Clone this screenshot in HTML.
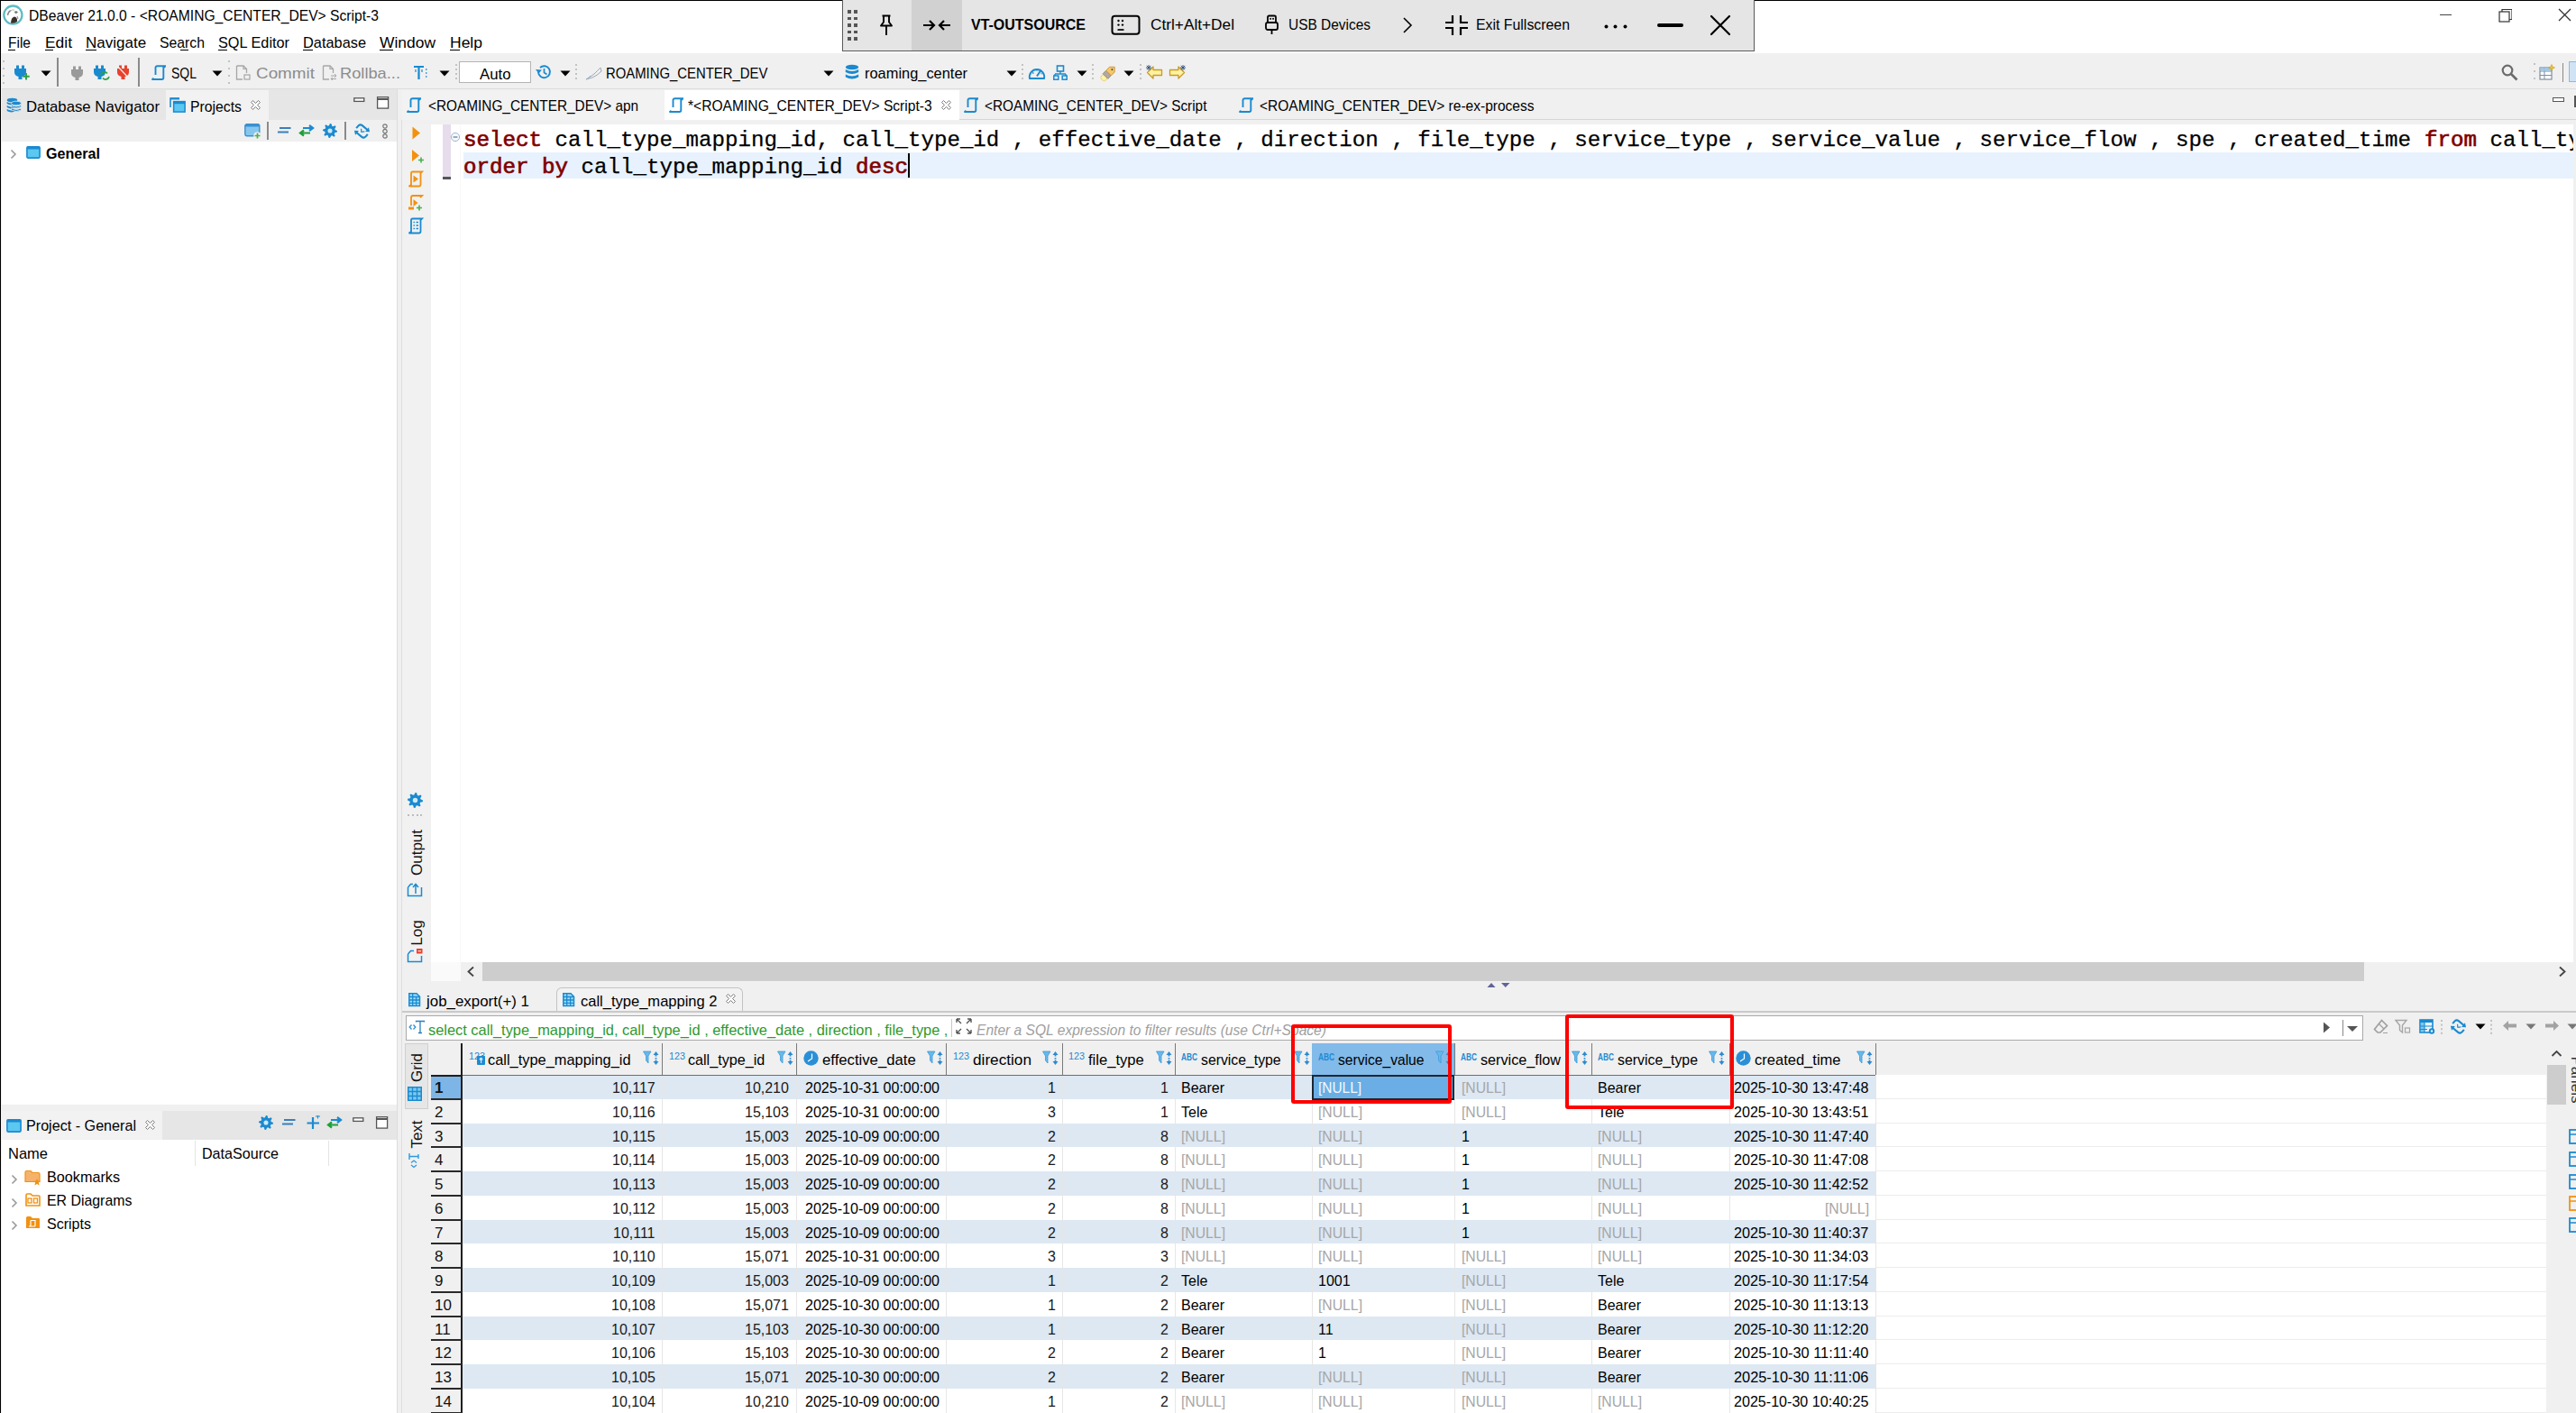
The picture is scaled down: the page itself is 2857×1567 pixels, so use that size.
<!DOCTYPE html><html><head><meta charset="utf-8"><style>
html,body{margin:0;padding:0;width:2857px;height:1567px;overflow:hidden;background:#f0f0f0;}
body>div,body>svg{position:absolute;}
.t{white-space:pre;}
</style></head><body>
<div style="left:0px;top:0px;width:2857px;height:59px;background:#fff;"></div>
<div style="left:0px;top:0px;width:2857px;height:1px;background:#000;"></div>
<div style="left:0px;top:0px;width:1px;height:1567px;background:#000;"></div>
<div class="t" style="left:32.00px;top:8.12px;font-family:'Liberation Sans',sans-serif;font-size:17px;line-height:18.989px;color:#000;transform:scaleX(0.9208);transform-origin:0 0;">DBeaver 21.0.0 - &lt;ROAMING_CENTER_DEV&gt; Script-3</div>
<div class="t" style="left:9.00px;top:38.12px;font-family:'Liberation Sans',sans-serif;font-size:17px;line-height:18.989px;color:#000;transform:scaleX(0.9126);transform-origin:0 0;">File</div>
<div class="t" style="left:50.00px;top:38.12px;font-family:'Liberation Sans',sans-serif;font-size:17px;line-height:18.989px;color:#000;transform:scaleX(1.0241);transform-origin:0 0;">Edit</div>
<div class="t" style="left:95.00px;top:38.12px;font-family:'Liberation Sans',sans-serif;font-size:17px;line-height:18.989px;color:#000;">Navigate</div>
<div class="t" style="left:177.00px;top:38.12px;font-family:'Liberation Sans',sans-serif;font-size:17px;line-height:18.989px;color:#000;transform:scaleX(0.9282);transform-origin:0 0;">Search</div>
<div class="t" style="left:242.00px;top:38.12px;font-family:'Liberation Sans',sans-serif;font-size:17px;line-height:18.989px;color:#000;transform:scaleX(0.9573);transform-origin:0 0;">SQL Editor</div>
<div class="t" style="left:336.00px;top:38.12px;font-family:'Liberation Sans',sans-serif;font-size:17px;line-height:18.989px;color:#000;transform:scaleX(0.9619);transform-origin:0 0;">Database</div>
<div class="t" style="left:421.00px;top:38.12px;font-family:'Liberation Sans',sans-serif;font-size:17px;line-height:18.989px;color:#000;transform:scaleX(1.0254);transform-origin:0 0;">Window</div>
<div class="t" style="left:499.00px;top:38.12px;font-family:'Liberation Sans',sans-serif;font-size:17px;line-height:18.989px;color:#000;transform:scaleX(1.0296);transform-origin:0 0;">Help</div>
<div style="left:2px;top:59px;width:2855px;height:40px;background:#f0f0f0;"></div>
<div style="left:2px;top:98px;width:2855px;height:1px;background:#dcdcdc;"></div>
<div style="left:2px;top:99px;width:438px;height:34px;background:#e6e6e6;"></div>
<div style="left:184px;top:100px;width:114px;height:33px;background:#f2f2f2;"></div>
<div style="left:2px;top:133px;width:438px;height:24px;background:#f0f0f0;"></div>
<div style="left:2px;top:157px;width:438px;height:1068px;background:#fff;"></div>
<div style="left:2px;top:1232px;width:438px;height:32px;background:#e6e6e6;"></div>
<div style="left:2px;top:1232px;width:178px;height:32px;background:#f2f2f2;"></div>
<div style="left:2px;top:1264px;width:438px;height:303px;background:#fff;"></div>
<div style="left:446px;top:99px;width:2411px;height:34px;background:#f0f0f0;"></div>
<div style="left:446px;top:132px;width:2411px;height:1px;background:#d6d6d6;"></div>
<div style="left:446px;top:100px;width:291px;height:33px;background:#f2f2f2;"></div>
<div style="left:737px;top:100px;width:327px;height:33px;background:#fff;"></div>
<div style="left:446px;top:138px;width:2408px;height:929px;background:#fff;"></div>
<div style="left:446px;top:138px;width:32px;height:929px;background:#f1f1f1;"></div>
<div style="left:514px;top:169px;width:2340px;height:29px;background:#e8f2fe;"></div>
<div style="left:446px;top:1067px;width:2408px;height:21px;background:#f0f0f0;"></div>
<div style="left:535px;top:1067px;width:2087px;height:21px;background:#cdcdcd;"></div>
<div style="left:446px;top:1121px;width:2411px;height:2px;background:#c9c9c9;"></div>
<div style="left:617px;top:1095px;width:207px;height:28px;background:#f2f2f2;box-sizing:border-box;border:1px solid #c3c3c3;border-bottom:none;border-radius:6px 6px 0 0;"></div>
<div style="left:450px;top:1126px;width:2171px;height:28px;background:#fff;box-sizing:border-box;border:1px solid #a9a9a9;"></div>
<div style="left:478px;top:1157px;width:2346px;height:35px;background:#f0f0f0;"></div>
<div style="left:478px;top:1192px;width:2346px;height:375px;background:#fff;"></div>
<div style="left:2824px;top:1157px;width:21px;height:410px;background:#f0f0f0;"></div>
<div class="t" style="left:190.00px;top:71.61px;font-family:'Liberation Sans',sans-serif;font-size:17px;line-height:18.989px;color:#000;transform:scaleX(0.8231);transform-origin:0 0;">SQL</div>
<div class="t" style="left:284.00px;top:71.61px;font-family:'Liberation Sans',sans-serif;font-size:17px;line-height:18.989px;color:#8c8c8c;transform:scaleX(1.1101);transform-origin:0 0;">Commit</div>
<div class="t" style="left:377.00px;top:71.61px;font-family:'Liberation Sans',sans-serif;font-size:17px;line-height:18.989px;color:#8c8c8c;transform:scaleX(1.0743);transform-origin:0 0;">Rollba...</div>
<div style="left:509px;top:68px;width:80px;height:24px;background:#fff;box-sizing:border-box;border:1px solid #b4b4b4;"></div>
<div class="t" style="left:532.00px;top:72.61px;font-family:'Liberation Sans',sans-serif;font-size:17px;line-height:18.989px;color:#000;transform:scaleX(0.9865);transform-origin:0 0;">Auto</div>
<div class="t" style="left:672.00px;top:72.02px;font-family:'Liberation Sans',sans-serif;font-size:17px;line-height:18.989px;color:#000;transform:scaleX(0.8747);transform-origin:0 0;">ROAMING_CENTER_DEV</div>
<div class="t" style="left:959.00px;top:72.21px;font-family:'Liberation Sans',sans-serif;font-size:17px;line-height:18.989px;color:#000;transform:scaleX(0.9651);transform-origin:0 0;">roaming_center</div>
<div class="t" style="left:29.00px;top:109.11px;font-family:'Liberation Sans',sans-serif;font-size:17px;line-height:18.989px;color:#000;transform:scaleX(0.9850);transform-origin:0 0;">Database Navigator</div>
<div class="t" style="left:211.00px;top:109.11px;font-family:'Liberation Sans',sans-serif;font-size:17px;line-height:18.989px;color:#000;transform:scaleX(0.9282);transform-origin:0 0;">Projects</div>
<div class="t" style="left:51.00px;top:160.62px;font-family:'Liberation Sans',sans-serif;font-size:17px;line-height:18.989px;color:#000;font-weight:bold;transform:scaleX(0.9477);transform-origin:0 0;">General</div>
<div class="t" style="left:29.00px;top:1239.12px;font-family:'Liberation Sans',sans-serif;font-size:17px;line-height:18.989px;color:#000;transform:scaleX(0.9494);transform-origin:0 0;">Project - General</div>
<div class="t" style="left:9.00px;top:1269.62px;font-family:'Liberation Sans',sans-serif;font-size:17px;line-height:18.989px;color:#000;transform:scaleX(0.9703);transform-origin:0 0;">Name</div>
<div class="t" style="left:223.60px;top:1269.62px;font-family:'Liberation Sans',sans-serif;font-size:17px;line-height:18.989px;color:#000;transform:scaleX(0.9468);transform-origin:0 0;">DataSource</div>
<div style="left:216px;top:1265px;width:1px;height:28px;background:#e4e4e4;"></div>
<div style="left:364px;top:1265px;width:1px;height:28px;background:#e4e4e4;"></div>
<div class="t" style="left:51.60px;top:1296.21px;font-family:'Liberation Sans',sans-serif;font-size:17px;line-height:18.989px;color:#000;transform:scaleX(0.9526);transform-origin:0 0;">Bookmarks</div>
<div class="t" style="left:51.60px;top:1322.12px;font-family:'Liberation Sans',sans-serif;font-size:17px;line-height:18.989px;color:#000;transform:scaleX(0.9339);transform-origin:0 0;">ER Diagrams</div>
<div class="t" style="left:51.60px;top:1347.52px;font-family:'Liberation Sans',sans-serif;font-size:17px;line-height:18.989px;color:#000;transform:scaleX(0.9431);transform-origin:0 0;">Scripts</div>
<div class="t" style="left:474.60px;top:108.31px;font-family:'Liberation Sans',sans-serif;font-size:17px;line-height:18.989px;color:#000;transform:scaleX(0.9034);transform-origin:0 0;">&lt;ROAMING_CENTER_DEV&gt; apn</div>
<div class="t" style="left:763.30px;top:108.31px;font-family:'Liberation Sans',sans-serif;font-size:17px;line-height:18.989px;color:#000;transform:scaleX(0.9184);transform-origin:0 0;">*&lt;ROAMING_CENTER_DEV&gt; Script-3</div>
<div class="t" style="left:1091.60px;top:108.31px;font-family:'Liberation Sans',sans-serif;font-size:17px;line-height:18.989px;color:#000;transform:scaleX(0.9025);transform-origin:0 0;">&lt;ROAMING_CENTER_DEV&gt; Script</div>
<div class="t" style="left:1396.50px;top:108.31px;font-family:'Liberation Sans',sans-serif;font-size:17px;line-height:18.989px;color:#000;transform:scaleX(0.9131);transform-origin:0 0;">&lt;ROAMING_CENTER_DEV&gt; re-ex-process</div>
<div class="t" style="left:514.00px;top:141.87px;font-family:'Liberation Mono',monospace;font-size:24.17px;line-height:27.385px;color:#800000;-webkit-text-stroke:0.7px #800000;">select</div>
<div class="t" style="left:601.00px;top:141.87px;font-family:'Liberation Mono',monospace;font-size:24.17px;line-height:27.385px;color:#000;-webkit-text-stroke:0.25px #000;"> call_type_mapping_id, call_type_id , effective_date , direction , file_type , service_type , service_value , service_flow , spe , created_time </div>
<div class="t" style="left:2689.00px;top:141.87px;font-family:'Liberation Mono',monospace;font-size:24.17px;line-height:27.385px;color:#800000;-webkit-text-stroke:0.7px #800000;">from</div>
<div class="t" style="left:2747.00px;top:141.87px;font-family:'Liberation Mono',monospace;font-size:24.17px;line-height:27.385px;color:#000;-webkit-text-stroke:0.25px #000;"> call_ty</div>
<div class="t" style="left:514.00px;top:171.87px;font-family:'Liberation Mono',monospace;font-size:24.17px;line-height:27.385px;color:#800000;-webkit-text-stroke:0.7px #800000;">order</div>
<div class="t" style="left:586.50px;top:171.87px;font-family:'Liberation Mono',monospace;font-size:24.17px;line-height:27.385px;color:#000;-webkit-text-stroke:0.25px #000;"> </div>
<div class="t" style="left:601.00px;top:171.87px;font-family:'Liberation Mono',monospace;font-size:24.17px;line-height:27.385px;color:#800000;-webkit-text-stroke:0.7px #800000;">by</div>
<div class="t" style="left:630.00px;top:171.87px;font-family:'Liberation Mono',monospace;font-size:24.17px;line-height:27.385px;color:#000;-webkit-text-stroke:0.25px #000;"> call_type_mapping_id </div>
<div class="t" style="left:949.00px;top:171.87px;font-family:'Liberation Mono',monospace;font-size:24.17px;line-height:27.385px;color:#800000;-webkit-text-stroke:0.7px #800000;">desc</div>
<div style="left:1007px;top:170px;width:2px;height:27px;background:#000;"></div>
<div style="left:2854px;top:133px;width:3px;height:934px;background:#f0f0f0;"></div>
<div class="t" style="left:473.40px;top:1100.91px;font-family:'Liberation Sans',sans-serif;font-size:17px;line-height:18.989px;color:#000;transform:scaleX(0.9929);transform-origin:0 0;">job_export(+) 1</div>
<div class="t" style="left:644.00px;top:1100.91px;font-family:'Liberation Sans',sans-serif;font-size:17px;line-height:18.989px;color:#000;transform:scaleX(0.9715);transform-origin:0 0;">call_type_mapping 2</div>
<div class="t" style="left:474.60px;top:1133.02px;font-family:'Liberation Sans',sans-serif;font-size:17px;line-height:18.989px;color:#2e9a2e;transform:scaleX(0.9641);transform-origin:0 0;">select call_type_mapping_id, call_type_id , effective_date , direction , file_type ,</div>
<div style="left:1055px;top:1130px;width:1px;height:20px;background:#c8c8c8;"></div>
<div class="t" style="left:1083.00px;top:1133.02px;font-family:'Liberation Sans',sans-serif;font-size:17px;line-height:18.989px;color:#a0a0a0;font-style:italic;transform:scaleX(0.9162);transform-origin:0 0;">Enter a SQL expression to filter results (use Ctrl+Space)</div>
<div style="left:734px;top:1157px;width:1px;height:35px;background:#7a7a7a;"></div>
<div style="left:883px;top:1157px;width:1px;height:35px;background:#7a7a7a;"></div>
<div style="left:1049px;top:1157px;width:1px;height:35px;background:#7a7a7a;"></div>
<div style="left:1178px;top:1157px;width:1px;height:35px;background:#7a7a7a;"></div>
<div style="left:1303px;top:1157px;width:1px;height:35px;background:#7a7a7a;"></div>
<div style="left:1455px;top:1157px;width:1px;height:35px;background:#7a7a7a;"></div>
<div style="left:1613px;top:1157px;width:1px;height:35px;background:#7a7a7a;"></div>
<div style="left:1765px;top:1157px;width:1px;height:35px;background:#7a7a7a;"></div>
<div style="left:1918px;top:1157px;width:1px;height:35px;background:#7a7a7a;"></div>
<div style="left:2080px;top:1157px;width:1px;height:35px;background:#7a7a7a;"></div>
<div style="left:478px;top:1192px;width:1602px;height:1px;background:#6e6e6e;"></div>
<div style="left:1455px;top:1157px;width:158px;height:35px;background:#82baea;"></div>
<div style="left:512px;top:1192px;width:1568px;height:27px;background:#dde8f3;"></div>
<div style="left:2080px;top:1218px;width:744px;height:1px;background:#ececec;"></div>
<div style="left:2080px;top:1245px;width:744px;height:1px;background:#ececec;"></div>
<div style="left:512px;top:1246px;width:1568px;height:26px;background:#dde8f3;"></div>
<div style="left:2080px;top:1271px;width:744px;height:1px;background:#ececec;"></div>
<div style="left:2080px;top:1298px;width:744px;height:1px;background:#ececec;"></div>
<div style="left:512px;top:1299px;width:1568px;height:27px;background:#dde8f3;"></div>
<div style="left:2080px;top:1325px;width:744px;height:1px;background:#ececec;"></div>
<div style="left:2080px;top:1352px;width:744px;height:1px;background:#ececec;"></div>
<div style="left:512px;top:1353px;width:1568px;height:26px;background:#dde8f3;"></div>
<div style="left:2080px;top:1378px;width:744px;height:1px;background:#ececec;"></div>
<div style="left:2080px;top:1405px;width:744px;height:1px;background:#ececec;"></div>
<div style="left:512px;top:1406px;width:1568px;height:27px;background:#dde8f3;"></div>
<div style="left:2080px;top:1432px;width:744px;height:1px;background:#ececec;"></div>
<div style="left:2080px;top:1459px;width:744px;height:1px;background:#ececec;"></div>
<div style="left:512px;top:1460px;width:1568px;height:26px;background:#dde8f3;"></div>
<div style="left:2080px;top:1485px;width:744px;height:1px;background:#ececec;"></div>
<div style="left:2080px;top:1512px;width:744px;height:1px;background:#ececec;"></div>
<div style="left:512px;top:1513px;width:1568px;height:27px;background:#dde8f3;"></div>
<div style="left:2080px;top:1539px;width:744px;height:1px;background:#ececec;"></div>
<div style="left:2080px;top:1566px;width:744px;height:1px;background:#ececec;"></div>
<div style="left:734px;top:1193px;width:1px;height:374px;background:#e6e6e6;"></div>
<div style="left:883px;top:1193px;width:1px;height:374px;background:#e6e6e6;"></div>
<div style="left:1049px;top:1193px;width:1px;height:374px;background:#e6e6e6;"></div>
<div style="left:1178px;top:1193px;width:1px;height:374px;background:#e6e6e6;"></div>
<div style="left:1303px;top:1193px;width:1px;height:374px;background:#e6e6e6;"></div>
<div style="left:1455px;top:1193px;width:1px;height:374px;background:#e6e6e6;"></div>
<div style="left:1613px;top:1193px;width:1px;height:374px;background:#e6e6e6;"></div>
<div style="left:1765px;top:1193px;width:1px;height:374px;background:#e6e6e6;"></div>
<div style="left:1918px;top:1193px;width:1px;height:374px;background:#e6e6e6;"></div>
<div style="left:2080px;top:1193px;width:1px;height:374px;background:#e6e6e6;"></div>
<div style="left:512px;top:1192px;width:1568px;height:1px;background:#6e6e6e;"></div>
<div style="left:478px;top:1192px;width:34px;height:375px;background:#f0f0f0;"></div>
<div style="left:478px;top:1192px;width:34px;height:27px;background:#7db6e6;"></div>
<div style="left:511px;top:1157px;width:2px;height:410px;background:#1e1e1e;"></div>
<div style="left:478px;top:1218px;width:34px;height:2px;background:#2a2a2a;"></div>
<div style="left:478px;top:1245px;width:34px;height:2px;background:#2a2a2a;"></div>
<div style="left:478px;top:1271px;width:34px;height:2px;background:#2a2a2a;"></div>
<div style="left:478px;top:1298px;width:34px;height:2px;background:#2a2a2a;"></div>
<div style="left:478px;top:1325px;width:34px;height:2px;background:#2a2a2a;"></div>
<div style="left:478px;top:1352px;width:34px;height:2px;background:#2a2a2a;"></div>
<div style="left:478px;top:1378px;width:34px;height:2px;background:#2a2a2a;"></div>
<div style="left:478px;top:1405px;width:34px;height:2px;background:#2a2a2a;"></div>
<div style="left:478px;top:1432px;width:34px;height:2px;background:#2a2a2a;"></div>
<div style="left:478px;top:1459px;width:34px;height:2px;background:#2a2a2a;"></div>
<div style="left:478px;top:1485px;width:34px;height:2px;background:#2a2a2a;"></div>
<div style="left:478px;top:1512px;width:34px;height:2px;background:#2a2a2a;"></div>
<div style="left:478px;top:1539px;width:34px;height:2px;background:#2a2a2a;"></div>
<div style="left:478px;top:1566px;width:34px;height:2px;background:#2a2a2a;"></div>
<div style="left:478px;top:1592px;width:34px;height:2px;background:#2a2a2a;"></div>
<div class="t" style="left:482.00px;top:1197.12px;font-family:'Liberation Sans',sans-serif;font-size:17px;line-height:18.989px;color:#111;font-weight:bold;">1</div>
<div class="t" style="left:679.31px;top:1197.12px;font-family:'Liberation Sans',sans-serif;font-size:17px;line-height:18.989px;color:#1a1a1a;transform:scaleX(0.9400);transform-origin:0 0;">10,117</div>
<div class="t" style="left:826.12px;top:1197.12px;font-family:'Liberation Sans',sans-serif;font-size:17px;line-height:18.989px;color:#1a1a1a;transform:scaleX(0.9400);transform-origin:0 0;">10,210</div>
<div class="t" style="left:893.30px;top:1197.12px;font-family:'Liberation Sans',sans-serif;font-size:17px;line-height:18.989px;color:#000;transform:scaleX(0.9439);transform-origin:0 0;">2025-10-31 00:00:00</div>
<div class="t" style="left:1161.71px;top:1197.12px;font-family:'Liberation Sans',sans-serif;font-size:17px;line-height:18.989px;color:#1a1a1a;transform:scaleX(0.9400);transform-origin:0 0;">1</div>
<div class="t" style="left:1286.51px;top:1197.12px;font-family:'Liberation Sans',sans-serif;font-size:17px;line-height:18.989px;color:#1a1a1a;transform:scaleX(0.9400);transform-origin:0 0;">1</div>
<div class="t" style="left:1310.00px;top:1197.12px;font-family:'Liberation Sans',sans-serif;font-size:17px;line-height:18.989px;color:#000;transform:scaleX(0.9400);transform-origin:0 0;">Bearer</div>
<div class="t" style="left:1462.30px;top:1197.12px;font-family:'Liberation Sans',sans-serif;font-size:17px;line-height:18.989px;color:#a6a6a6;transform:scaleX(0.9261);transform-origin:0 0;">[NULL]</div>
<div class="t" style="left:1621.00px;top:1197.12px;font-family:'Liberation Sans',sans-serif;font-size:17px;line-height:18.989px;color:#a6a6a6;transform:scaleX(0.9261);transform-origin:0 0;">[NULL]</div>
<div class="t" style="left:1772.40px;top:1197.12px;font-family:'Liberation Sans',sans-serif;font-size:17px;line-height:18.989px;color:#000;transform:scaleX(0.9400);transform-origin:0 0;">Bearer</div>
<div class="t" style="left:1923.40px;top:1197.12px;font-family:'Liberation Sans',sans-serif;font-size:17px;line-height:18.989px;color:#000;transform:scaleX(0.9464);transform-origin:0 0;">2025-10-30 13:47:48</div>
<div class="t" style="left:482.00px;top:1223.88px;font-family:'Liberation Sans',sans-serif;font-size:17px;line-height:18.989px;color:#111;">2</div>
<div class="t" style="left:679.31px;top:1223.88px;font-family:'Liberation Sans',sans-serif;font-size:17px;line-height:18.989px;color:#1a1a1a;transform:scaleX(0.9400);transform-origin:0 0;">10,116</div>
<div class="t" style="left:826.12px;top:1223.88px;font-family:'Liberation Sans',sans-serif;font-size:17px;line-height:18.989px;color:#1a1a1a;transform:scaleX(0.9400);transform-origin:0 0;">15,103</div>
<div class="t" style="left:893.30px;top:1223.88px;font-family:'Liberation Sans',sans-serif;font-size:17px;line-height:18.989px;color:#000;transform:scaleX(0.9439);transform-origin:0 0;">2025-10-31 00:00:00</div>
<div class="t" style="left:1161.71px;top:1223.88px;font-family:'Liberation Sans',sans-serif;font-size:17px;line-height:18.989px;color:#1a1a1a;transform:scaleX(0.9400);transform-origin:0 0;">3</div>
<div class="t" style="left:1286.51px;top:1223.88px;font-family:'Liberation Sans',sans-serif;font-size:17px;line-height:18.989px;color:#1a1a1a;transform:scaleX(0.9400);transform-origin:0 0;">1</div>
<div class="t" style="left:1310.00px;top:1223.88px;font-family:'Liberation Sans',sans-serif;font-size:17px;line-height:18.989px;color:#000;transform:scaleX(0.9400);transform-origin:0 0;">Tele</div>
<div class="t" style="left:1462.30px;top:1223.88px;font-family:'Liberation Sans',sans-serif;font-size:17px;line-height:18.989px;color:#a6a6a6;transform:scaleX(0.9261);transform-origin:0 0;">[NULL]</div>
<div class="t" style="left:1621.00px;top:1223.88px;font-family:'Liberation Sans',sans-serif;font-size:17px;line-height:18.989px;color:#a6a6a6;transform:scaleX(0.9261);transform-origin:0 0;">[NULL]</div>
<div class="t" style="left:1772.40px;top:1223.88px;font-family:'Liberation Sans',sans-serif;font-size:17px;line-height:18.989px;color:#000;transform:scaleX(0.9400);transform-origin:0 0;">Tele</div>
<div class="t" style="left:1923.40px;top:1223.88px;font-family:'Liberation Sans',sans-serif;font-size:17px;line-height:18.989px;color:#000;transform:scaleX(0.9464);transform-origin:0 0;">2025-10-30 13:43:51</div>
<div class="t" style="left:482.00px;top:1250.63px;font-family:'Liberation Sans',sans-serif;font-size:17px;line-height:18.989px;color:#111;">3</div>
<div class="t" style="left:679.31px;top:1250.63px;font-family:'Liberation Sans',sans-serif;font-size:17px;line-height:18.989px;color:#1a1a1a;transform:scaleX(0.9400);transform-origin:0 0;">10,115</div>
<div class="t" style="left:826.12px;top:1250.63px;font-family:'Liberation Sans',sans-serif;font-size:17px;line-height:18.989px;color:#1a1a1a;transform:scaleX(0.9400);transform-origin:0 0;">15,003</div>
<div class="t" style="left:893.30px;top:1250.63px;font-family:'Liberation Sans',sans-serif;font-size:17px;line-height:18.989px;color:#000;transform:scaleX(0.9439);transform-origin:0 0;">2025-10-09 00:00:00</div>
<div class="t" style="left:1161.71px;top:1250.63px;font-family:'Liberation Sans',sans-serif;font-size:17px;line-height:18.989px;color:#1a1a1a;transform:scaleX(0.9400);transform-origin:0 0;">2</div>
<div class="t" style="left:1286.51px;top:1250.63px;font-family:'Liberation Sans',sans-serif;font-size:17px;line-height:18.989px;color:#1a1a1a;transform:scaleX(0.9400);transform-origin:0 0;">8</div>
<div class="t" style="left:1310.00px;top:1250.63px;font-family:'Liberation Sans',sans-serif;font-size:17px;line-height:18.989px;color:#a6a6a6;transform:scaleX(0.9261);transform-origin:0 0;">[NULL]</div>
<div class="t" style="left:1462.30px;top:1250.63px;font-family:'Liberation Sans',sans-serif;font-size:17px;line-height:18.989px;color:#a6a6a6;transform:scaleX(0.9261);transform-origin:0 0;">[NULL]</div>
<div class="t" style="left:1621.00px;top:1250.63px;font-family:'Liberation Sans',sans-serif;font-size:17px;line-height:18.989px;color:#000;transform:scaleX(0.9400);transform-origin:0 0;">1</div>
<div class="t" style="left:1772.40px;top:1250.63px;font-family:'Liberation Sans',sans-serif;font-size:17px;line-height:18.989px;color:#a6a6a6;transform:scaleX(0.9261);transform-origin:0 0;">[NULL]</div>
<div class="t" style="left:1923.40px;top:1250.63px;font-family:'Liberation Sans',sans-serif;font-size:17px;line-height:18.989px;color:#000;transform:scaleX(0.9540);transform-origin:0 0;">2025-10-30 11:47:40</div>
<div class="t" style="left:482.00px;top:1277.39px;font-family:'Liberation Sans',sans-serif;font-size:17px;line-height:18.989px;color:#111;">4</div>
<div class="t" style="left:679.31px;top:1277.39px;font-family:'Liberation Sans',sans-serif;font-size:17px;line-height:18.989px;color:#1a1a1a;transform:scaleX(0.9400);transform-origin:0 0;">10,114</div>
<div class="t" style="left:826.12px;top:1277.39px;font-family:'Liberation Sans',sans-serif;font-size:17px;line-height:18.989px;color:#1a1a1a;transform:scaleX(0.9400);transform-origin:0 0;">15,003</div>
<div class="t" style="left:893.30px;top:1277.39px;font-family:'Liberation Sans',sans-serif;font-size:17px;line-height:18.989px;color:#000;transform:scaleX(0.9439);transform-origin:0 0;">2025-10-09 00:00:00</div>
<div class="t" style="left:1161.71px;top:1277.39px;font-family:'Liberation Sans',sans-serif;font-size:17px;line-height:18.989px;color:#1a1a1a;transform:scaleX(0.9400);transform-origin:0 0;">2</div>
<div class="t" style="left:1286.51px;top:1277.39px;font-family:'Liberation Sans',sans-serif;font-size:17px;line-height:18.989px;color:#1a1a1a;transform:scaleX(0.9400);transform-origin:0 0;">8</div>
<div class="t" style="left:1310.00px;top:1277.39px;font-family:'Liberation Sans',sans-serif;font-size:17px;line-height:18.989px;color:#a6a6a6;transform:scaleX(0.9261);transform-origin:0 0;">[NULL]</div>
<div class="t" style="left:1462.30px;top:1277.39px;font-family:'Liberation Sans',sans-serif;font-size:17px;line-height:18.989px;color:#a6a6a6;transform:scaleX(0.9261);transform-origin:0 0;">[NULL]</div>
<div class="t" style="left:1621.00px;top:1277.39px;font-family:'Liberation Sans',sans-serif;font-size:17px;line-height:18.989px;color:#000;transform:scaleX(0.9400);transform-origin:0 0;">1</div>
<div class="t" style="left:1772.40px;top:1277.39px;font-family:'Liberation Sans',sans-serif;font-size:17px;line-height:18.989px;color:#a6a6a6;transform:scaleX(0.9261);transform-origin:0 0;">[NULL]</div>
<div class="t" style="left:1923.40px;top:1277.39px;font-family:'Liberation Sans',sans-serif;font-size:17px;line-height:18.989px;color:#000;transform:scaleX(0.9540);transform-origin:0 0;">2025-10-30 11:47:08</div>
<div class="t" style="left:482.00px;top:1304.15px;font-family:'Liberation Sans',sans-serif;font-size:17px;line-height:18.989px;color:#111;">5</div>
<div class="t" style="left:679.31px;top:1304.15px;font-family:'Liberation Sans',sans-serif;font-size:17px;line-height:18.989px;color:#1a1a1a;transform:scaleX(0.9400);transform-origin:0 0;">10,113</div>
<div class="t" style="left:826.12px;top:1304.15px;font-family:'Liberation Sans',sans-serif;font-size:17px;line-height:18.989px;color:#1a1a1a;transform:scaleX(0.9400);transform-origin:0 0;">15,003</div>
<div class="t" style="left:893.30px;top:1304.15px;font-family:'Liberation Sans',sans-serif;font-size:17px;line-height:18.989px;color:#000;transform:scaleX(0.9439);transform-origin:0 0;">2025-10-09 00:00:00</div>
<div class="t" style="left:1161.71px;top:1304.15px;font-family:'Liberation Sans',sans-serif;font-size:17px;line-height:18.989px;color:#1a1a1a;transform:scaleX(0.9400);transform-origin:0 0;">2</div>
<div class="t" style="left:1286.51px;top:1304.15px;font-family:'Liberation Sans',sans-serif;font-size:17px;line-height:18.989px;color:#1a1a1a;transform:scaleX(0.9400);transform-origin:0 0;">8</div>
<div class="t" style="left:1310.00px;top:1304.15px;font-family:'Liberation Sans',sans-serif;font-size:17px;line-height:18.989px;color:#a6a6a6;transform:scaleX(0.9261);transform-origin:0 0;">[NULL]</div>
<div class="t" style="left:1462.30px;top:1304.15px;font-family:'Liberation Sans',sans-serif;font-size:17px;line-height:18.989px;color:#a6a6a6;transform:scaleX(0.9261);transform-origin:0 0;">[NULL]</div>
<div class="t" style="left:1621.00px;top:1304.15px;font-family:'Liberation Sans',sans-serif;font-size:17px;line-height:18.989px;color:#000;transform:scaleX(0.9400);transform-origin:0 0;">1</div>
<div class="t" style="left:1772.40px;top:1304.15px;font-family:'Liberation Sans',sans-serif;font-size:17px;line-height:18.989px;color:#a6a6a6;transform:scaleX(0.9261);transform-origin:0 0;">[NULL]</div>
<div class="t" style="left:1923.40px;top:1304.15px;font-family:'Liberation Sans',sans-serif;font-size:17px;line-height:18.989px;color:#000;transform:scaleX(0.9540);transform-origin:0 0;">2025-10-30 11:42:52</div>
<div class="t" style="left:482.00px;top:1330.91px;font-family:'Liberation Sans',sans-serif;font-size:17px;line-height:18.989px;color:#111;">6</div>
<div class="t" style="left:679.31px;top:1330.91px;font-family:'Liberation Sans',sans-serif;font-size:17px;line-height:18.989px;color:#1a1a1a;transform:scaleX(0.9400);transform-origin:0 0;">10,112</div>
<div class="t" style="left:826.12px;top:1330.91px;font-family:'Liberation Sans',sans-serif;font-size:17px;line-height:18.989px;color:#1a1a1a;transform:scaleX(0.9400);transform-origin:0 0;">15,003</div>
<div class="t" style="left:893.30px;top:1330.91px;font-family:'Liberation Sans',sans-serif;font-size:17px;line-height:18.989px;color:#000;transform:scaleX(0.9439);transform-origin:0 0;">2025-10-09 00:00:00</div>
<div class="t" style="left:1161.71px;top:1330.91px;font-family:'Liberation Sans',sans-serif;font-size:17px;line-height:18.989px;color:#1a1a1a;transform:scaleX(0.9400);transform-origin:0 0;">2</div>
<div class="t" style="left:1286.51px;top:1330.91px;font-family:'Liberation Sans',sans-serif;font-size:17px;line-height:18.989px;color:#1a1a1a;transform:scaleX(0.9400);transform-origin:0 0;">8</div>
<div class="t" style="left:1310.00px;top:1330.91px;font-family:'Liberation Sans',sans-serif;font-size:17px;line-height:18.989px;color:#a6a6a6;transform:scaleX(0.9261);transform-origin:0 0;">[NULL]</div>
<div class="t" style="left:1462.30px;top:1330.91px;font-family:'Liberation Sans',sans-serif;font-size:17px;line-height:18.989px;color:#a6a6a6;transform:scaleX(0.9261);transform-origin:0 0;">[NULL]</div>
<div class="t" style="left:1621.00px;top:1330.91px;font-family:'Liberation Sans',sans-serif;font-size:17px;line-height:18.989px;color:#000;transform:scaleX(0.9400);transform-origin:0 0;">1</div>
<div class="t" style="left:1772.40px;top:1330.91px;font-family:'Liberation Sans',sans-serif;font-size:17px;line-height:18.989px;color:#a6a6a6;transform:scaleX(0.9261);transform-origin:0 0;">[NULL]</div>
<div class="t" style="left:2023.80px;top:1330.91px;font-family:'Liberation Sans',sans-serif;font-size:17px;line-height:18.989px;color:#a6a6a6;transform:scaleX(0.9261);transform-origin:0 0;">[NULL]</div>
<div class="t" style="left:482.00px;top:1357.67px;font-family:'Liberation Sans',sans-serif;font-size:17px;line-height:18.989px;color:#111;">7</div>
<div class="t" style="left:680.49px;top:1357.67px;font-family:'Liberation Sans',sans-serif;font-size:17px;line-height:18.989px;color:#1a1a1a;transform:scaleX(0.9400);transform-origin:0 0;">10,111</div>
<div class="t" style="left:826.12px;top:1357.67px;font-family:'Liberation Sans',sans-serif;font-size:17px;line-height:18.989px;color:#1a1a1a;transform:scaleX(0.9400);transform-origin:0 0;">15,003</div>
<div class="t" style="left:893.30px;top:1357.67px;font-family:'Liberation Sans',sans-serif;font-size:17px;line-height:18.989px;color:#000;transform:scaleX(0.9439);transform-origin:0 0;">2025-10-09 00:00:00</div>
<div class="t" style="left:1161.71px;top:1357.67px;font-family:'Liberation Sans',sans-serif;font-size:17px;line-height:18.989px;color:#1a1a1a;transform:scaleX(0.9400);transform-origin:0 0;">2</div>
<div class="t" style="left:1286.51px;top:1357.67px;font-family:'Liberation Sans',sans-serif;font-size:17px;line-height:18.989px;color:#1a1a1a;transform:scaleX(0.9400);transform-origin:0 0;">8</div>
<div class="t" style="left:1310.00px;top:1357.67px;font-family:'Liberation Sans',sans-serif;font-size:17px;line-height:18.989px;color:#a6a6a6;transform:scaleX(0.9261);transform-origin:0 0;">[NULL]</div>
<div class="t" style="left:1462.30px;top:1357.67px;font-family:'Liberation Sans',sans-serif;font-size:17px;line-height:18.989px;color:#a6a6a6;transform:scaleX(0.9261);transform-origin:0 0;">[NULL]</div>
<div class="t" style="left:1621.00px;top:1357.67px;font-family:'Liberation Sans',sans-serif;font-size:17px;line-height:18.989px;color:#000;transform:scaleX(0.9400);transform-origin:0 0;">1</div>
<div class="t" style="left:1772.40px;top:1357.67px;font-family:'Liberation Sans',sans-serif;font-size:17px;line-height:18.989px;color:#a6a6a6;transform:scaleX(0.9261);transform-origin:0 0;">[NULL]</div>
<div class="t" style="left:1923.40px;top:1357.67px;font-family:'Liberation Sans',sans-serif;font-size:17px;line-height:18.989px;color:#000;transform:scaleX(0.9540);transform-origin:0 0;">2025-10-30 11:40:37</div>
<div class="t" style="left:482.00px;top:1384.43px;font-family:'Liberation Sans',sans-serif;font-size:17px;line-height:18.989px;color:#111;">8</div>
<div class="t" style="left:679.31px;top:1384.43px;font-family:'Liberation Sans',sans-serif;font-size:17px;line-height:18.989px;color:#1a1a1a;transform:scaleX(0.9400);transform-origin:0 0;">10,110</div>
<div class="t" style="left:826.12px;top:1384.43px;font-family:'Liberation Sans',sans-serif;font-size:17px;line-height:18.989px;color:#1a1a1a;transform:scaleX(0.9400);transform-origin:0 0;">15,071</div>
<div class="t" style="left:893.30px;top:1384.43px;font-family:'Liberation Sans',sans-serif;font-size:17px;line-height:18.989px;color:#000;transform:scaleX(0.9439);transform-origin:0 0;">2025-10-31 00:00:00</div>
<div class="t" style="left:1161.71px;top:1384.43px;font-family:'Liberation Sans',sans-serif;font-size:17px;line-height:18.989px;color:#1a1a1a;transform:scaleX(0.9400);transform-origin:0 0;">3</div>
<div class="t" style="left:1286.51px;top:1384.43px;font-family:'Liberation Sans',sans-serif;font-size:17px;line-height:18.989px;color:#1a1a1a;transform:scaleX(0.9400);transform-origin:0 0;">3</div>
<div class="t" style="left:1310.00px;top:1384.43px;font-family:'Liberation Sans',sans-serif;font-size:17px;line-height:18.989px;color:#a6a6a6;transform:scaleX(0.9261);transform-origin:0 0;">[NULL]</div>
<div class="t" style="left:1462.30px;top:1384.43px;font-family:'Liberation Sans',sans-serif;font-size:17px;line-height:18.989px;color:#a6a6a6;transform:scaleX(0.9261);transform-origin:0 0;">[NULL]</div>
<div class="t" style="left:1621.00px;top:1384.43px;font-family:'Liberation Sans',sans-serif;font-size:17px;line-height:18.989px;color:#a6a6a6;transform:scaleX(0.9261);transform-origin:0 0;">[NULL]</div>
<div class="t" style="left:1772.40px;top:1384.43px;font-family:'Liberation Sans',sans-serif;font-size:17px;line-height:18.989px;color:#a6a6a6;transform:scaleX(0.9261);transform-origin:0 0;">[NULL]</div>
<div class="t" style="left:1923.40px;top:1384.43px;font-family:'Liberation Sans',sans-serif;font-size:17px;line-height:18.989px;color:#000;transform:scaleX(0.9540);transform-origin:0 0;">2025-10-30 11:34:03</div>
<div class="t" style="left:482.00px;top:1411.19px;font-family:'Liberation Sans',sans-serif;font-size:17px;line-height:18.989px;color:#111;">9</div>
<div class="t" style="left:678.12px;top:1411.19px;font-family:'Liberation Sans',sans-serif;font-size:17px;line-height:18.989px;color:#1a1a1a;transform:scaleX(0.9400);transform-origin:0 0;">10,109</div>
<div class="t" style="left:826.12px;top:1411.19px;font-family:'Liberation Sans',sans-serif;font-size:17px;line-height:18.989px;color:#1a1a1a;transform:scaleX(0.9400);transform-origin:0 0;">15,003</div>
<div class="t" style="left:893.30px;top:1411.19px;font-family:'Liberation Sans',sans-serif;font-size:17px;line-height:18.989px;color:#000;transform:scaleX(0.9439);transform-origin:0 0;">2025-10-09 00:00:00</div>
<div class="t" style="left:1161.71px;top:1411.19px;font-family:'Liberation Sans',sans-serif;font-size:17px;line-height:18.989px;color:#1a1a1a;transform:scaleX(0.9400);transform-origin:0 0;">1</div>
<div class="t" style="left:1286.51px;top:1411.19px;font-family:'Liberation Sans',sans-serif;font-size:17px;line-height:18.989px;color:#1a1a1a;transform:scaleX(0.9400);transform-origin:0 0;">2</div>
<div class="t" style="left:1310.00px;top:1411.19px;font-family:'Liberation Sans',sans-serif;font-size:17px;line-height:18.989px;color:#000;transform:scaleX(0.9400);transform-origin:0 0;">Tele</div>
<div class="t" style="left:1462.30px;top:1411.19px;font-family:'Liberation Sans',sans-serif;font-size:17px;line-height:18.989px;color:#000;transform:scaleX(0.9400);transform-origin:0 0;">1001</div>
<div class="t" style="left:1621.00px;top:1411.19px;font-family:'Liberation Sans',sans-serif;font-size:17px;line-height:18.989px;color:#a6a6a6;transform:scaleX(0.9261);transform-origin:0 0;">[NULL]</div>
<div class="t" style="left:1772.40px;top:1411.19px;font-family:'Liberation Sans',sans-serif;font-size:17px;line-height:18.989px;color:#000;transform:scaleX(0.9400);transform-origin:0 0;">Tele</div>
<div class="t" style="left:1923.40px;top:1411.19px;font-family:'Liberation Sans',sans-serif;font-size:17px;line-height:18.989px;color:#000;transform:scaleX(0.9540);transform-origin:0 0;">2025-10-30 11:17:54</div>
<div class="t" style="left:482.00px;top:1437.95px;font-family:'Liberation Sans',sans-serif;font-size:17px;line-height:18.989px;color:#111;">10</div>
<div class="t" style="left:678.12px;top:1437.95px;font-family:'Liberation Sans',sans-serif;font-size:17px;line-height:18.989px;color:#1a1a1a;transform:scaleX(0.9400);transform-origin:0 0;">10,108</div>
<div class="t" style="left:826.12px;top:1437.95px;font-family:'Liberation Sans',sans-serif;font-size:17px;line-height:18.989px;color:#1a1a1a;transform:scaleX(0.9400);transform-origin:0 0;">15,071</div>
<div class="t" style="left:893.30px;top:1437.95px;font-family:'Liberation Sans',sans-serif;font-size:17px;line-height:18.989px;color:#000;transform:scaleX(0.9439);transform-origin:0 0;">2025-10-30 00:00:00</div>
<div class="t" style="left:1161.71px;top:1437.95px;font-family:'Liberation Sans',sans-serif;font-size:17px;line-height:18.989px;color:#1a1a1a;transform:scaleX(0.9400);transform-origin:0 0;">1</div>
<div class="t" style="left:1286.51px;top:1437.95px;font-family:'Liberation Sans',sans-serif;font-size:17px;line-height:18.989px;color:#1a1a1a;transform:scaleX(0.9400);transform-origin:0 0;">2</div>
<div class="t" style="left:1310.00px;top:1437.95px;font-family:'Liberation Sans',sans-serif;font-size:17px;line-height:18.989px;color:#000;transform:scaleX(0.9400);transform-origin:0 0;">Bearer</div>
<div class="t" style="left:1462.30px;top:1437.95px;font-family:'Liberation Sans',sans-serif;font-size:17px;line-height:18.989px;color:#a6a6a6;transform:scaleX(0.9261);transform-origin:0 0;">[NULL]</div>
<div class="t" style="left:1621.00px;top:1437.95px;font-family:'Liberation Sans',sans-serif;font-size:17px;line-height:18.989px;color:#a6a6a6;transform:scaleX(0.9261);transform-origin:0 0;">[NULL]</div>
<div class="t" style="left:1772.40px;top:1437.95px;font-family:'Liberation Sans',sans-serif;font-size:17px;line-height:18.989px;color:#000;transform:scaleX(0.9400);transform-origin:0 0;">Bearer</div>
<div class="t" style="left:1923.40px;top:1437.95px;font-family:'Liberation Sans',sans-serif;font-size:17px;line-height:18.989px;color:#000;transform:scaleX(0.9540);transform-origin:0 0;">2025-10-30 11:13:13</div>
<div class="t" style="left:482.00px;top:1464.71px;font-family:'Liberation Sans',sans-serif;font-size:17px;line-height:18.989px;color:#111;">11</div>
<div class="t" style="left:678.12px;top:1464.71px;font-family:'Liberation Sans',sans-serif;font-size:17px;line-height:18.989px;color:#1a1a1a;transform:scaleX(0.9400);transform-origin:0 0;">10,107</div>
<div class="t" style="left:826.12px;top:1464.71px;font-family:'Liberation Sans',sans-serif;font-size:17px;line-height:18.989px;color:#1a1a1a;transform:scaleX(0.9400);transform-origin:0 0;">15,103</div>
<div class="t" style="left:893.30px;top:1464.71px;font-family:'Liberation Sans',sans-serif;font-size:17px;line-height:18.989px;color:#000;transform:scaleX(0.9439);transform-origin:0 0;">2025-10-30 00:00:00</div>
<div class="t" style="left:1161.71px;top:1464.71px;font-family:'Liberation Sans',sans-serif;font-size:17px;line-height:18.989px;color:#1a1a1a;transform:scaleX(0.9400);transform-origin:0 0;">1</div>
<div class="t" style="left:1286.51px;top:1464.71px;font-family:'Liberation Sans',sans-serif;font-size:17px;line-height:18.989px;color:#1a1a1a;transform:scaleX(0.9400);transform-origin:0 0;">2</div>
<div class="t" style="left:1310.00px;top:1464.71px;font-family:'Liberation Sans',sans-serif;font-size:17px;line-height:18.989px;color:#000;transform:scaleX(0.9400);transform-origin:0 0;">Bearer</div>
<div class="t" style="left:1462.30px;top:1464.71px;font-family:'Liberation Sans',sans-serif;font-size:17px;line-height:18.989px;color:#000;transform:scaleX(0.9400);transform-origin:0 0;">11</div>
<div class="t" style="left:1621.00px;top:1464.71px;font-family:'Liberation Sans',sans-serif;font-size:17px;line-height:18.989px;color:#a6a6a6;transform:scaleX(0.9261);transform-origin:0 0;">[NULL]</div>
<div class="t" style="left:1772.40px;top:1464.71px;font-family:'Liberation Sans',sans-serif;font-size:17px;line-height:18.989px;color:#000;transform:scaleX(0.9400);transform-origin:0 0;">Bearer</div>
<div class="t" style="left:1923.40px;top:1464.71px;font-family:'Liberation Sans',sans-serif;font-size:17px;line-height:18.989px;color:#000;transform:scaleX(0.9540);transform-origin:0 0;">2025-10-30 11:12:20</div>
<div class="t" style="left:482.00px;top:1491.48px;font-family:'Liberation Sans',sans-serif;font-size:17px;line-height:18.989px;color:#111;">12</div>
<div class="t" style="left:678.12px;top:1491.48px;font-family:'Liberation Sans',sans-serif;font-size:17px;line-height:18.989px;color:#1a1a1a;transform:scaleX(0.9400);transform-origin:0 0;">10,106</div>
<div class="t" style="left:826.12px;top:1491.48px;font-family:'Liberation Sans',sans-serif;font-size:17px;line-height:18.989px;color:#1a1a1a;transform:scaleX(0.9400);transform-origin:0 0;">15,103</div>
<div class="t" style="left:893.30px;top:1491.48px;font-family:'Liberation Sans',sans-serif;font-size:17px;line-height:18.989px;color:#000;transform:scaleX(0.9439);transform-origin:0 0;">2025-10-30 00:00:00</div>
<div class="t" style="left:1161.71px;top:1491.48px;font-family:'Liberation Sans',sans-serif;font-size:17px;line-height:18.989px;color:#1a1a1a;transform:scaleX(0.9400);transform-origin:0 0;">2</div>
<div class="t" style="left:1286.51px;top:1491.48px;font-family:'Liberation Sans',sans-serif;font-size:17px;line-height:18.989px;color:#1a1a1a;transform:scaleX(0.9400);transform-origin:0 0;">2</div>
<div class="t" style="left:1310.00px;top:1491.48px;font-family:'Liberation Sans',sans-serif;font-size:17px;line-height:18.989px;color:#000;transform:scaleX(0.9400);transform-origin:0 0;">Bearer</div>
<div class="t" style="left:1462.30px;top:1491.48px;font-family:'Liberation Sans',sans-serif;font-size:17px;line-height:18.989px;color:#000;transform:scaleX(0.9400);transform-origin:0 0;">1</div>
<div class="t" style="left:1621.00px;top:1491.48px;font-family:'Liberation Sans',sans-serif;font-size:17px;line-height:18.989px;color:#a6a6a6;transform:scaleX(0.9261);transform-origin:0 0;">[NULL]</div>
<div class="t" style="left:1772.40px;top:1491.48px;font-family:'Liberation Sans',sans-serif;font-size:17px;line-height:18.989px;color:#000;transform:scaleX(0.9400);transform-origin:0 0;">Bearer</div>
<div class="t" style="left:1923.40px;top:1491.48px;font-family:'Liberation Sans',sans-serif;font-size:17px;line-height:18.989px;color:#000;transform:scaleX(0.9618);transform-origin:0 0;">2025-10-30 11:11:40</div>
<div class="t" style="left:482.00px;top:1518.23px;font-family:'Liberation Sans',sans-serif;font-size:17px;line-height:18.989px;color:#111;">13</div>
<div class="t" style="left:678.12px;top:1518.23px;font-family:'Liberation Sans',sans-serif;font-size:17px;line-height:18.989px;color:#1a1a1a;transform:scaleX(0.9400);transform-origin:0 0;">10,105</div>
<div class="t" style="left:826.12px;top:1518.23px;font-family:'Liberation Sans',sans-serif;font-size:17px;line-height:18.989px;color:#1a1a1a;transform:scaleX(0.9400);transform-origin:0 0;">15,071</div>
<div class="t" style="left:893.30px;top:1518.23px;font-family:'Liberation Sans',sans-serif;font-size:17px;line-height:18.989px;color:#000;transform:scaleX(0.9439);transform-origin:0 0;">2025-10-30 00:00:00</div>
<div class="t" style="left:1161.71px;top:1518.23px;font-family:'Liberation Sans',sans-serif;font-size:17px;line-height:18.989px;color:#1a1a1a;transform:scaleX(0.9400);transform-origin:0 0;">2</div>
<div class="t" style="left:1286.51px;top:1518.23px;font-family:'Liberation Sans',sans-serif;font-size:17px;line-height:18.989px;color:#1a1a1a;transform:scaleX(0.9400);transform-origin:0 0;">2</div>
<div class="t" style="left:1310.00px;top:1518.23px;font-family:'Liberation Sans',sans-serif;font-size:17px;line-height:18.989px;color:#000;transform:scaleX(0.9400);transform-origin:0 0;">Bearer</div>
<div class="t" style="left:1462.30px;top:1518.23px;font-family:'Liberation Sans',sans-serif;font-size:17px;line-height:18.989px;color:#a6a6a6;transform:scaleX(0.9261);transform-origin:0 0;">[NULL]</div>
<div class="t" style="left:1621.00px;top:1518.23px;font-family:'Liberation Sans',sans-serif;font-size:17px;line-height:18.989px;color:#a6a6a6;transform:scaleX(0.9261);transform-origin:0 0;">[NULL]</div>
<div class="t" style="left:1772.40px;top:1518.23px;font-family:'Liberation Sans',sans-serif;font-size:17px;line-height:18.989px;color:#000;transform:scaleX(0.9400);transform-origin:0 0;">Bearer</div>
<div class="t" style="left:1923.40px;top:1518.23px;font-family:'Liberation Sans',sans-serif;font-size:17px;line-height:18.989px;color:#000;transform:scaleX(0.9618);transform-origin:0 0;">2025-10-30 11:11:06</div>
<div class="t" style="left:482.00px;top:1545.00px;font-family:'Liberation Sans',sans-serif;font-size:17px;line-height:18.989px;color:#111;">14</div>
<div class="t" style="left:678.12px;top:1545.00px;font-family:'Liberation Sans',sans-serif;font-size:17px;line-height:18.989px;color:#1a1a1a;transform:scaleX(0.9400);transform-origin:0 0;">10,104</div>
<div class="t" style="left:826.12px;top:1545.00px;font-family:'Liberation Sans',sans-serif;font-size:17px;line-height:18.989px;color:#1a1a1a;transform:scaleX(0.9400);transform-origin:0 0;">10,210</div>
<div class="t" style="left:893.30px;top:1545.00px;font-family:'Liberation Sans',sans-serif;font-size:17px;line-height:18.989px;color:#000;transform:scaleX(0.9439);transform-origin:0 0;">2025-10-09 00:00:00</div>
<div class="t" style="left:1161.71px;top:1545.00px;font-family:'Liberation Sans',sans-serif;font-size:17px;line-height:18.989px;color:#1a1a1a;transform:scaleX(0.9400);transform-origin:0 0;">1</div>
<div class="t" style="left:1286.51px;top:1545.00px;font-family:'Liberation Sans',sans-serif;font-size:17px;line-height:18.989px;color:#1a1a1a;transform:scaleX(0.9400);transform-origin:0 0;">2</div>
<div class="t" style="left:1310.00px;top:1545.00px;font-family:'Liberation Sans',sans-serif;font-size:17px;line-height:18.989px;color:#a6a6a6;transform:scaleX(0.9261);transform-origin:0 0;">[NULL]</div>
<div class="t" style="left:1462.30px;top:1545.00px;font-family:'Liberation Sans',sans-serif;font-size:17px;line-height:18.989px;color:#a6a6a6;transform:scaleX(0.9261);transform-origin:0 0;">[NULL]</div>
<div class="t" style="left:1621.00px;top:1545.00px;font-family:'Liberation Sans',sans-serif;font-size:17px;line-height:18.989px;color:#a6a6a6;transform:scaleX(0.9261);transform-origin:0 0;">[NULL]</div>
<div class="t" style="left:1772.40px;top:1545.00px;font-family:'Liberation Sans',sans-serif;font-size:17px;line-height:18.989px;color:#a6a6a6;transform:scaleX(0.9261);transform-origin:0 0;">[NULL]</div>
<div class="t" style="left:1923.40px;top:1545.00px;font-family:'Liberation Sans',sans-serif;font-size:17px;line-height:18.989px;color:#000;transform:scaleX(0.9464);transform-origin:0 0;">2025-10-30 10:40:25</div>
<div class="t" style="left:541.00px;top:1165.62px;font-family:'Liberation Sans',sans-serif;font-size:17px;line-height:18.989px;color:#000;transform:scaleX(0.9638);transform-origin:0 0;">call_type_mapping_id</div>
<div class="t" style="left:763.40px;top:1165.62px;font-family:'Liberation Sans',sans-serif;font-size:17px;line-height:18.989px;color:#000;transform:scaleX(0.9489);transform-origin:0 0;">call_type_id</div>
<div class="t" style="left:912.00px;top:1165.62px;font-family:'Liberation Sans',sans-serif;font-size:17px;line-height:18.989px;color:#000;transform:scaleX(0.9825);transform-origin:0 0;">effective_date</div>
<div class="t" style="left:1078.70px;top:1165.62px;font-family:'Liberation Sans',sans-serif;font-size:17px;line-height:18.989px;color:#000;transform:scaleX(1.0115);transform-origin:0 0;">direction</div>
<div class="t" style="left:1207.00px;top:1165.62px;font-family:'Liberation Sans',sans-serif;font-size:17px;line-height:18.989px;color:#000;transform:scaleX(0.9760);transform-origin:0 0;">file_type</div>
<div class="t" style="left:1331.70px;top:1165.62px;font-family:'Liberation Sans',sans-serif;font-size:17px;line-height:18.989px;color:#000;transform:scaleX(0.9284);transform-origin:0 0;">service_type</div>
<div class="t" style="left:1483.50px;top:1165.62px;font-family:'Liberation Sans',sans-serif;font-size:17px;line-height:18.989px;color:#000;transform:scaleX(0.9187);transform-origin:0 0;">service_value</div>
<div class="t" style="left:1642.00px;top:1165.62px;font-family:'Liberation Sans',sans-serif;font-size:17px;line-height:18.989px;color:#000;transform:scaleX(0.9515);transform-origin:0 0;">service_flow</div>
<div class="t" style="left:1794.00px;top:1165.62px;font-family:'Liberation Sans',sans-serif;font-size:17px;line-height:18.989px;color:#000;transform:scaleX(0.9326);transform-origin:0 0;">service_type</div>
<div class="t" style="left:1946.00px;top:1165.62px;font-family:'Liberation Sans',sans-serif;font-size:17px;line-height:18.989px;color:#000;transform:scaleX(0.9718);transform-origin:0 0;">created_time</div>
<svg style="left:520px;top:1166px;" width="20" height="16" viewBox="0 0 20 16"><text x="0" y="9" font-family="Liberation Sans" font-size="11" fill="#1f8ad2" textLength="18" lengthAdjust="spacingAndGlyphs">123</text><rect x="9" y="5" width="9" height="10" rx="1" fill="#1f8ad2"/><circle cx="13.5" cy="8.5" r="1.8" fill="#bfe6ff"/><rect x="13" y="9" width="1.2" height="4" fill="#bfe6ff"/></svg>
<svg style="left:742px;top:1166px;" width="20" height="16" viewBox="0 0 20 16"><text x="0" y="9" font-family="Liberation Sans" font-size="11" fill="#1f8ad2" textLength="18" lengthAdjust="spacingAndGlyphs">123</text></svg>
<svg style="left:891.0px;top:1164.5px;" width="17" height="17" viewBox="0 0 17 17"><circle cx="8.5" cy="8.5" r="8.2" fill="#2b8fd6"/><path d="M9.5 3.5 L9.5 9 L5 12" stroke="#fff" stroke-width="1.2" fill="none"/></svg>
<svg style="left:1056.6px;top:1166px;" width="20" height="16" viewBox="0 0 20 16"><text x="0" y="9" font-family="Liberation Sans" font-size="11" fill="#1f8ad2" textLength="18" lengthAdjust="spacingAndGlyphs">123</text></svg>
<svg style="left:1185px;top:1166px;" width="20" height="16" viewBox="0 0 20 16"><text x="0" y="9" font-family="Liberation Sans" font-size="11" fill="#1f8ad2" textLength="18" lengthAdjust="spacingAndGlyphs">123</text></svg>
<svg style="left:1310.2px;top:1167px;" width="20" height="12" viewBox="0 0 20 12"><text x="0" y="8.5" font-family="Liberation Sans" font-weight="bold" font-size="10" fill="#1f8ad2" textLength="18" lengthAdjust="spacingAndGlyphs">ABC</text></svg>
<svg style="left:1461.7px;top:1167px;" width="20" height="12" viewBox="0 0 20 12"><text x="0" y="8.5" font-family="Liberation Sans" font-weight="bold" font-size="10" fill="#1f8ad2" textLength="18" lengthAdjust="spacingAndGlyphs">ABC</text></svg>
<svg style="left:1620px;top:1167px;" width="20" height="12" viewBox="0 0 20 12"><text x="0" y="8.5" font-family="Liberation Sans" font-weight="bold" font-size="10" fill="#1f8ad2" textLength="18" lengthAdjust="spacingAndGlyphs">ABC</text></svg>
<svg style="left:1772px;top:1167px;" width="20" height="12" viewBox="0 0 20 12"><text x="0" y="8.5" font-family="Liberation Sans" font-weight="bold" font-size="10" fill="#1f8ad2" textLength="18" lengthAdjust="spacingAndGlyphs">ABC</text></svg>
<svg style="left:1924.5px;top:1164.5px;" width="17" height="17" viewBox="0 0 17 17"><circle cx="8.5" cy="8.5" r="8.2" fill="#2b8fd6"/><path d="M9.5 3.5 L9.5 9 L5 12" stroke="#fff" stroke-width="1.2" fill="none"/></svg>
<svg style="left:713.2px;top:1165px;" width="19" height="17" viewBox="0 0 19 17"><path d="M0.5 1 L9 1 L6 6 L6 14 L3.5 11 L3.5 6 Z" fill="#68b8ea" stroke="#3d9ad8" stroke-width="0.8"/><path d="M14.5 1 L11.5 5 L13.6 5 L13.6 6.5 L15.4 6.5 L15.4 5 L17.5 5 Z" fill="#2c8ad0"/><rect x="13.6" y="8" width="1.8" height="1.5" fill="#2c8ad0"/><path d="M14.5 16 L11.5 12 L13.6 12 L13.6 10.5 L15.4 10.5 L15.4 12 L17.5 12 Z" fill="#2c8ad0"/></svg>
<svg style="left:861.6px;top:1165px;" width="19" height="17" viewBox="0 0 19 17"><path d="M0.5 1 L9 1 L6 6 L6 14 L3.5 11 L3.5 6 Z" fill="#68b8ea" stroke="#3d9ad8" stroke-width="0.8"/><path d="M14.5 1 L11.5 5 L13.6 5 L13.6 6.5 L15.4 6.5 L15.4 5 L17.5 5 Z" fill="#2c8ad0"/><rect x="13.6" y="8" width="1.8" height="1.5" fill="#2c8ad0"/><path d="M14.5 16 L11.5 12 L13.6 12 L13.6 10.5 L15.4 10.5 L15.4 12 L17.5 12 Z" fill="#2c8ad0"/></svg>
<svg style="left:1027.8px;top:1165px;" width="19" height="17" viewBox="0 0 19 17"><path d="M0.5 1 L9 1 L6 6 L6 14 L3.5 11 L3.5 6 Z" fill="#68b8ea" stroke="#3d9ad8" stroke-width="0.8"/><path d="M14.5 1 L11.5 5 L13.6 5 L13.6 6.5 L15.4 6.5 L15.4 5 L17.5 5 Z" fill="#2c8ad0"/><rect x="13.6" y="8" width="1.8" height="1.5" fill="#2c8ad0"/><path d="M14.5 16 L11.5 12 L13.6 12 L13.6 10.5 L15.4 10.5 L15.4 12 L17.5 12 Z" fill="#2c8ad0"/></svg>
<svg style="left:1156.4px;top:1165px;" width="19" height="17" viewBox="0 0 19 17"><path d="M0.5 1 L9 1 L6 6 L6 14 L3.5 11 L3.5 6 Z" fill="#68b8ea" stroke="#3d9ad8" stroke-width="0.8"/><path d="M14.5 1 L11.5 5 L13.6 5 L13.6 6.5 L15.4 6.5 L15.4 5 L17.5 5 Z" fill="#2c8ad0"/><rect x="13.6" y="8" width="1.8" height="1.5" fill="#2c8ad0"/><path d="M14.5 16 L11.5 12 L13.6 12 L13.6 10.5 L15.4 10.5 L15.4 12 L17.5 12 Z" fill="#2c8ad0"/></svg>
<svg style="left:1281.8px;top:1165px;" width="19" height="17" viewBox="0 0 19 17"><path d="M0.5 1 L9 1 L6 6 L6 14 L3.5 11 L3.5 6 Z" fill="#68b8ea" stroke="#3d9ad8" stroke-width="0.8"/><path d="M14.5 1 L11.5 5 L13.6 5 L13.6 6.5 L15.4 6.5 L15.4 5 L17.5 5 Z" fill="#2c8ad0"/><rect x="13.6" y="8" width="1.8" height="1.5" fill="#2c8ad0"/><path d="M14.5 16 L11.5 12 L13.6 12 L13.6 10.5 L15.4 10.5 L15.4 12 L17.5 12 Z" fill="#2c8ad0"/></svg>
<svg style="left:1434.5px;top:1165px;" width="19" height="17" viewBox="0 0 19 17"><path d="M0.5 1 L9 1 L6 6 L6 14 L3.5 11 L3.5 6 Z" fill="#68b8ea" stroke="#3d9ad8" stroke-width="0.8"/><path d="M14.5 1 L11.5 5 L13.6 5 L13.6 6.5 L15.4 6.5 L15.4 5 L17.5 5 Z" fill="#2c8ad0"/><rect x="13.6" y="8" width="1.8" height="1.5" fill="#2c8ad0"/><path d="M14.5 16 L11.5 12 L13.6 12 L13.6 10.5 L15.4 10.5 L15.4 12 L17.5 12 Z" fill="#2c8ad0"/></svg>
<svg style="left:1591.7px;top:1165px;" width="19" height="17" viewBox="0 0 19 17"><path d="M0.5 1 L9 1 L6 6 L6 14 L3.5 11 L3.5 6 Z" fill="#68b8ea" stroke="#3d9ad8" stroke-width="0.8"/><path d="M14.5 1 L11.5 5 L13.6 5 L13.6 6.5 L15.4 6.5 L15.4 5 L17.5 5 Z" fill="#2c8ad0"/><rect x="13.6" y="8" width="1.8" height="1.5" fill="#2c8ad0"/><path d="M14.5 16 L11.5 12 L13.6 12 L13.6 10.5 L15.4 10.5 L15.4 12 L17.5 12 Z" fill="#2c8ad0"/></svg>
<svg style="left:1743.3px;top:1165px;" width="19" height="17" viewBox="0 0 19 17"><path d="M0.5 1 L9 1 L6 6 L6 14 L3.5 11 L3.5 6 Z" fill="#68b8ea" stroke="#3d9ad8" stroke-width="0.8"/><path d="M14.5 1 L11.5 5 L13.6 5 L13.6 6.5 L15.4 6.5 L15.4 5 L17.5 5 Z" fill="#2c8ad0"/><rect x="13.6" y="8" width="1.8" height="1.5" fill="#2c8ad0"/><path d="M14.5 16 L11.5 12 L13.6 12 L13.6 10.5 L15.4 10.5 L15.4 12 L17.5 12 Z" fill="#2c8ad0"/></svg>
<svg style="left:1895px;top:1165px;" width="19" height="17" viewBox="0 0 19 17"><path d="M0.5 1 L9 1 L6 6 L6 14 L3.5 11 L3.5 6 Z" fill="#68b8ea" stroke="#3d9ad8" stroke-width="0.8"/><path d="M14.5 1 L11.5 5 L13.6 5 L13.6 6.5 L15.4 6.5 L15.4 5 L17.5 5 Z" fill="#2c8ad0"/><rect x="13.6" y="8" width="1.8" height="1.5" fill="#2c8ad0"/><path d="M14.5 16 L11.5 12 L13.6 12 L13.6 10.5 L15.4 10.5 L15.4 12 L17.5 12 Z" fill="#2c8ad0"/></svg>
<svg style="left:2058.6px;top:1165px;" width="19" height="17" viewBox="0 0 19 17"><path d="M0.5 1 L9 1 L6 6 L6 14 L3.5 11 L3.5 6 Z" fill="#68b8ea" stroke="#3d9ad8" stroke-width="0.8"/><path d="M14.5 1 L11.5 5 L13.6 5 L13.6 6.5 L15.4 6.5 L15.4 5 L17.5 5 Z" fill="#2c8ad0"/><rect x="13.6" y="8" width="1.8" height="1.5" fill="#2c8ad0"/><path d="M14.5 16 L11.5 12 L13.6 12 L13.6 10.5 L15.4 10.5 L15.4 12 L17.5 12 Z" fill="#2c8ad0"/></svg>
<div style="left:1455px;top:1192px;width:158px;height:28px;background:#6aaee5;box-sizing:border-box;border:2px solid #1b2630;"></div>
<div class="t" style="left:1462.30px;top:1197.12px;font-family:'Liberation Sans',sans-serif;font-size:17px;line-height:18.989px;color:#f4faff;transform:scaleX(0.9072);transform-origin:0 0;">[NULL]</div>
<div style="left:1432px;top:1135.5px;width:178px;height:88px;background:transparent;box-sizing:border-box;border:4px solid #ff0000;border-radius:3px;"></div>
<div style="left:1736px;top:1124.6px;width:187px;height:105px;background:transparent;box-sizing:border-box;border:4px solid #ff0000;border-radius:3px;"></div>
<div style="left:478px;top:1067px;width:33px;height:21px;background:#fafafa;"></div>
<svg style="left:516px;top:1071px;" width="12" height="13" viewBox="0 0 12 13"><path d="M9 1.5 L3.5 6.5 L9 11.5" stroke="#444" stroke-width="1.8" fill="none"/></svg>
<svg style="left:2836px;top:1071px;" width="12" height="13" viewBox="0 0 12 13"><path d="M3 1.5 L8.5 6.5 L3 11.5" stroke="#444" stroke-width="1.8" fill="none"/></svg>
<svg style="left:1649px;top:1089px;" width="27" height="8" viewBox="0 0 27 8"><path d="M0.5 6 L5 1 L9.5 6 Z" fill="#62629a"/><path d="M16 1 L25.5 1 L20.75 6 Z" fill="#62629a"/></svg>
<div style="left:440px;top:99px;width:1px;height:1468px;background:#dcdcdc;"></div>
<div style="left:445px;top:133px;width:1px;height:1434px;background:#dedede;"></div>
<div style="left:446px;top:1121px;width:2411px;height:2px;background:#c9c9c9;"></div>
<div style="left:449px;top:1157px;width:26px;height:73px;background:#e6e6e6;box-sizing:border-box;border:1px solid #cfcfcf;"></div>
<div class="t" style="left:439.5px;top:1175.3px;width:45px;height:18px;transform:rotate(-90deg);font-family:'Liberation Sans';font-size:17px;line-height:18px;color:#111;text-align:center;">Grid</div>
<div class="t" style="left:439.5px;top:1249.35px;width:45px;height:18px;transform:rotate(-90deg);font-family:'Liberation Sans';font-size:17px;line-height:18px;color:#111;text-align:center;">Text</div>
<svg style="left:452px;top:1205px;" width="16" height="16" viewBox="0 0 16 16"><rect x="0.75" y="0.75" width="14.5" height="14.5" fill="#7cc8f0" stroke="#1a8ad0" stroke-width="1.5"/><path d="M5.5 1 V15 M10.5 1 V15 M1 5.5 H15 M1 10.5 H15" stroke="#1a8ad0" stroke-width="1.3"/></svg>
<svg style="left:453px;top:1278px;" width="13" height="18" viewBox="0 0 13 18"><path d="M1 1 V8 M1 4.5 H11 M11 2 V7" stroke="#2b9ae0" stroke-width="1.4" fill="none"/><path d="M3 11.5 L6 9 L9 11.5 M3 14 L6 16.5 L9 14" stroke="#2b9ae0" stroke-width="1.3" fill="none"/></svg>
<div style="left:478px;top:1192px;width:34px;height:2px;background:#1e1e1e;"></div>
<div style="left:2824px;top:1157px;width:22px;height:410px;background:#f0f0f0;"></div>
<svg style="left:2829px;top:1163px;" width="13" height="10" viewBox="0 0 13 10"><path d="M1.5 8 L6.5 3 L11.5 8" stroke="#444" stroke-width="1.8" fill="none"/></svg>
<div style="left:2825px;top:1181px;width:21px;height:44px;background:#cdcdcd;"></div>
<div style="left:2846px;top:1157px;width:11px;height:410px;background:#f0f0f0;"></div>
<svg style="left:2575px;top:1132px;" width="12" height="16" viewBox="0 0 12 16"><path d="M2 1.5 L9 7.5 L2 13.5 Z" fill="#555"/></svg>
<div style="left:2598px;top:1131px;width:1px;height:18px;background:#888;"></div>
<svg style="left:2602px;top:1137px;" width="14" height="8" viewBox="0 0 14 8"><path d="M1 1 L13 1 L7 7 Z" fill="#555"/></svg>
<svg style="left:453px;top:1131px;" width="19" height="16" viewBox="0 0 19 16"><path d="M3.5 5.5 L1.2 8 L3.5 10.5 M5.5 5.5 L7.8 8 L5.5 10.5" stroke="#2b8fd6" stroke-width="1.3" fill="none"/><path d="M8.5 2.5 V1.5 H17.5 V2.5 M13 1.5 V14.5 M11 14.5 H15" stroke="#2b7fc0" stroke-width="1.3" fill="none"/></svg>
<svg style="left:1059px;top:1128px;" width="20" height="20" viewBox="0 0 20 20"><path d="M2 2 L7 7 M2 2 H6 M2 2 V6 M18 2 L13 7 M18 2 H14 M18 2 V6 M2 18 L7 13 M2 18 H6 M2 18 V14 M18 18 L13 13 M18 18 H14 M18 18 V14" stroke="#555" stroke-width="1.4" fill="none"/></svg>
<div style="left:491px;top:138px;width:9px;height:58px;background:#e6dcec;"></div>
<div style="left:491px;top:196px;width:9px;height:3px;background:#555;"></div>
<div style="left:510px;top:138px;width:1px;height:929px;background:#f8f8f8;"></div>
<svg style="left:499px;top:146px;" width="12" height="12" viewBox="0 0 12 12"><circle cx="6" cy="6" r="4.6" fill="#f4f8fc" stroke="#9fb6cc" stroke-width="1"/><path d="M3.6 6 H8.4" stroke="#5c7890" stroke-width="1.2"/></svg>
<svg style="left:455px;top:139px;" width="14" height="17" viewBox="0 0 14 17"><path d="M2.5 1.5 L11 8.5 L2.5 15.5 Z" fill="#f29111"/></svg>
<svg style="left:455px;top:165px;" width="16" height="17" viewBox="0 0 16 17"><path d="M2 1 L10 7.5 L2 14 Z" fill="#f29111"/><path d="M12 9.5 V15.5 M9 12.5 H15" stroke="#4caf50" stroke-width="1.6"/></svg>
<svg style="left:452px;top:189px;" width="18" height="19" viewBox="0 0 18 19"><path d="M4 16 V3 Q4 1.5 5.5 1.5 H16 L14.5 3 V15.5 Q14.5 17.5 12.5 17.5 H1.5 Q2.5 17 4 16 Z" fill="none" stroke="#f29111" stroke-width="1.8"/><path d="M6.5 5.5 L12 9.5 L6.5 13.5 Z" fill="#f29111"/></svg>
<svg style="left:452px;top:215px;" width="18" height="20" viewBox="0 0 18 20"><path d="M4 13 V4 Q4 2 6 2 H16 L14 4" fill="none" stroke="#f29111" stroke-width="1.8"/><path d="M6.5 6 L11.5 10 L6.5 14 Z" fill="#f29111"/><rect x="1" y="14.5" width="6" height="3" fill="#f29111"/><path d="M13 12.5 V18.5 M10 15.5 H16" stroke="#4caf50" stroke-width="1.6"/></svg>
<svg style="left:452px;top:241px;" width="18" height="19" viewBox="0 0 18 19"><path d="M4 16 V3 Q4 1.5 5.5 1.5 H16 L14.5 3 V15.5 Q14.5 17.5 12.5 17.5 H1.5 Q2.5 17 4 16 Z" fill="none" stroke="#1a8ad0" stroke-width="1.8"/><path d="M6.5 5.5 H8 M9.5 5.5 H12 M6.5 9 H8 M9.5 9 H12 M6.5 12.5 H8 M9.5 12.5 H12" stroke="#1a8ad0" stroke-width="1.5"/></svg>
<svg style="left:452px;top:879px;" width="17" height="17" viewBox="0 0 17 17"><polygon points="17.00,8.50 16.84,10.16 14.15,10.84 13.59,11.90 14.51,14.51 13.22,15.57 10.84,14.15 9.69,14.50 8.50,17.00 6.84,16.84 6.16,14.15 5.10,13.59 2.49,14.51 1.43,13.22 2.85,10.84 2.50,9.69 0.00,8.50 0.16,6.84 2.85,6.16 3.41,5.10 2.49,2.49 3.78,1.43 6.16,2.85 7.31,2.50 8.50,0.00 10.16,0.16 10.84,2.85 11.90,3.41 14.51,2.49 15.57,3.78 14.15,6.16 14.50,7.31" fill="#1a8ad0"/><circle cx="8.5" cy="8.5" r="2.72" fill="#cfe8f8"/></svg>
<svg style="left:451px;top:902px;" width="18" height="4" viewBox="0 0 18 4"><path d="M1 2 H3 M6 2 H8 M11 2 H13 M15 2 H17" stroke="#888" stroke-width="1.2"/></svg>
<div class="t" style="left:439.5px;top:938.5px;width:45px;height:19px;transform:rotate(-90deg);font-family:'Liberation Sans';font-size:17px;line-height:19px;color:#111;text-align:center;">Output</div>
<div class="t" style="left:439.5px;top:1024.5px;width:45px;height:19px;transform:rotate(-90deg);font-family:'Liberation Sans';font-size:17px;line-height:19px;color:#111;text-align:center;">Log</div>
<svg style="left:451px;top:978px;" width="18" height="17" viewBox="0 0 18 17"><path d="M1.5 6 V15.5 H16.5 V6 M1.5 6 L4.5 2.5 H7" fill="none" stroke="#1a8ad0" stroke-width="1.5"/><path d="M10 13 V3 M7 6 L10 2.5 L13 6" fill="none" stroke="#1a8ad0" stroke-width="1.5"/></svg>
<svg style="left:451px;top:1051px;" width="18" height="17" viewBox="0 0 18 17"><path d="M1.5 7 V15.5 H16.5 V9 M1.5 7 L4.5 3.5 H8" fill="none" stroke="#1a8ad0" stroke-width="1.5"/><rect x="11" y="1" width="6.5" height="5.5" fill="#e8412c"/><path d="M12.5 3.8 H16" stroke="#fff" stroke-width="1"/></svg>
<div style="left:934px;top:0px;width:1012px;height:57px;background:#e5e5e5;box-sizing:border-box;border-left:1px solid #5a5a5a;border-right:1px solid #5a5a5a;border-bottom:1px solid #5a5a5a;"></div>
<div style="left:1011px;top:0px;width:56px;height:56px;background:#d1d1d1;"></div>
<div style="left:940px;top:11px;width:3.5px;height:3.5px;background:#555;"></div>
<div style="left:947px;top:11px;width:3.5px;height:3.5px;background:#555;"></div>
<div style="left:940px;top:18.5px;width:3.5px;height:3.5px;background:#555;"></div>
<div style="left:947px;top:18.5px;width:3.5px;height:3.5px;background:#555;"></div>
<div style="left:940px;top:26px;width:3.5px;height:3.5px;background:#555;"></div>
<div style="left:947px;top:26px;width:3.5px;height:3.5px;background:#555;"></div>
<div style="left:940px;top:33.5px;width:3.5px;height:3.5px;background:#555;"></div>
<div style="left:947px;top:33.5px;width:3.5px;height:3.5px;background:#555;"></div>
<div style="left:940px;top:41px;width:3.5px;height:3.5px;background:#555;"></div>
<div style="left:947px;top:41px;width:3.5px;height:3.5px;background:#555;"></div>
<svg style="left:975px;top:16px;" width="16" height="24" viewBox="0 0 16 24"><path d="M3.5 1.5 H12.5 M5 1.5 V8.5 L2 12.5 H14 L11 8.5 V1.5 M8 13 V23" stroke="#000" stroke-width="1.9" fill="none" stroke-linejoin="round"/></svg>
<svg style="left:1023px;top:21px;" width="32" height="14" viewBox="0 0 32 14"><path d="M1 7 H13 M8 2 L13 7 L8 12 M31 7 H19 M24 2 L19 7 L24 12" stroke="#000" stroke-width="2.2" fill="none"/></svg>
<div class="t" style="left:1077.00px;top:17.62px;font-family:'Liberation Sans',sans-serif;font-size:17px;line-height:18.989px;color:#000;font-weight:bold;transform:scaleX(0.9403);transform-origin:0 0;">VT-OUTSOURCE</div>
<svg style="left:1232px;top:16px;" width="33" height="24" viewBox="0 0 33 24"><rect x="1.5" y="1.8" width="30" height="20" rx="3" fill="none" stroke="#000" stroke-width="2"/><circle cx="8.5" cy="7" r="1.2" fill="#000"/><circle cx="13" cy="7" r="1.2" fill="#000"/><circle cx="8.5" cy="11.6" r="1.2" fill="#000"/><circle cx="13" cy="11.6" r="1.2" fill="#000"/><path d="M7.5 17 H14.5" stroke="#000" stroke-width="1.7"/></svg>
<div class="t" style="left:1276.00px;top:17.62px;font-family:'Liberation Sans',sans-serif;font-size:17px;line-height:18.989px;color:#000;transform:scaleX(1.0148);transform-origin:0 0;">Ctrl+Alt+Del</div>
<svg style="left:1401px;top:16px;" width="18" height="24" viewBox="0 0 18 24"><path d="M5 9 V3 Q5 1.5 6.5 1.5 H12.5 Q14 1.5 14 3 V9" fill="none" stroke="#000" stroke-width="1.8"/><rect x="3" y="9" width="13" height="8" rx="2" fill="none" stroke="#000" stroke-width="1.8"/><rect x="7.3" y="4" width="1.7" height="1.7" fill="#000"/><rect x="10.2" y="4" width="1.7" height="1.7" fill="#000"/><path d="M9.5 17 V22" stroke="#000" stroke-width="1.8"/></svg>
<div class="t" style="left:1429.00px;top:17.62px;font-family:'Liberation Sans',sans-serif;font-size:17px;line-height:18.989px;color:#000;transform:scaleX(0.9087);transform-origin:0 0;">USB Devices</div>
<svg style="left:1555px;top:18px;" width="12" height="20" viewBox="0 0 12 20"><path d="M2 2 L10 10 L2 18" stroke="#000" stroke-width="1.6" fill="none"/></svg>
<svg style="left:1602px;top:16px;" width="27" height="24" viewBox="0 0 27 24"><path d="M9 1 V9 H1 M18 1 V9 H26 M9 23 V15 H1 M18 23 V15 H26" stroke="#000" stroke-width="2.2" fill="none"/></svg>
<div class="t" style="left:1636.60px;top:17.62px;font-family:'Liberation Sans',sans-serif;font-size:17px;line-height:18.989px;color:#000;transform:scaleX(0.9329);transform-origin:0 0;">Exit Fullscreen</div>
<svg style="left:1778.5px;top:27px;" width="5" height="5" viewBox="0 0 5 5"><circle cx="2.5" cy="2.5" r="2" fill="#000"/></svg>
<svg style="left:1789px;top:27px;" width="5" height="5" viewBox="0 0 5 5"><circle cx="2.5" cy="2.5" r="2" fill="#000"/></svg>
<svg style="left:1799.5px;top:27px;" width="5" height="5" viewBox="0 0 5 5"><circle cx="2.5" cy="2.5" r="2" fill="#000"/></svg>
<div style="left:1838px;top:25.5px;width:29px;height:4px;background:#000;border-radius:2px;"></div>
<svg style="left:1896px;top:16px;" width="24" height="24" viewBox="0 0 24 24"><path d="M2 2 L22 22 M22 2 L2 22" stroke="#000" stroke-width="2.2" stroke-linecap="round"/></svg>
<div style="left:2706px;top:15.5px;width:13px;height:1.5px;background:#444;"></div>
<svg style="left:2771px;top:9px;" width="15" height="16" viewBox="0 0 15 16"><rect x="1" y="4" width="11" height="11" fill="none" stroke="#333" stroke-width="1.2"/><path d="M4 4 V1.5 H15 V12.5 H12" fill="none" stroke="#333" stroke-width="1.2"/></svg>
<svg style="left:2837px;top:9px;" width="15" height="15" viewBox="0 0 15 15"><path d="M1 1 L14 14 M14 1 L1 14" stroke="#333" stroke-width="1.3"/></svg>
<svg style="left:3px;top:5px;" width="23" height="23" viewBox="0 0 23 23"><circle cx="11.4" cy="11.6" r="10.1" fill="#fff" stroke="#5fbcc4" stroke-width="2.3"/><path d="M9 20.5 Q9.5 14 13 13.5 Q16.5 14 16 19 Q13 21.5 9 20.5 Z" fill="#3a2f2a"/><ellipse cx="14.8" cy="8.6" rx="1.8" ry="1.3" fill="#777"/><path d="M5.5 12 Q6 8 9 6.5" stroke="#888" stroke-width="1.4" fill="none"/><path d="M8 7 Q11 5.5 13 6" stroke="#bbb" stroke-width="1" fill="none"/><path d="M16 13 L17 16" stroke="#999" stroke-width="1.2"/></svg>
<svg style="left:2.5px;top:67px;" width="2" height="26" viewBox="0 0 2 26"><rect x="0" y="0.0" width="2" height="2" fill="#c2c2c2"/><rect x="0" y="8.0" width="2" height="2" fill="#c2c2c2"/><rect x="0" y="16.0" width="2" height="2" fill="#c2c2c2"/><rect x="0" y="24.0" width="2" height="2" fill="#c2c2c2"/></svg>
<svg style="left:15px;top:72px;" width="20" height="17" viewBox="0 0 20 17"><path d="M3 0.5 H6 V4 H9 V0.5 H12 V4 H14 V8 Q14 12 9.5 13 V16 H5.5 V13 Q1 12 1 8 V4 H3 Z" fill="#1a8ad0"/><path d="M14 9 V16.5 M10.3 12.75 H17.7" stroke="#2ea043" stroke-width="1.9"/></svg>
<svg style="left:45px;top:78px;" width="12" height="7" viewBox="0 0 12 7"><path d="M0.5 0.5 H11.5 L6 6.5 Z" fill="#000"/></svg>
<div style="left:63px;top:64px;width:2px;height:32px;background:#8a8a8a;"></div>
<svg style="left:78px;top:73px;" width="15" height="16" viewBox="0 0 15 16"><path d="M3 0.5 H6 V4 H9 V0.5 H12 V4 H14 V8 Q14 12 9.5 13 V16 H5.5 V13 Q1 12 1 8 V4 H3 Z" fill="#9a9a9a"/></svg>
<svg style="left:103px;top:72px;" width="20" height="17" viewBox="0 0 20 17"><path d="M3 0.5 H6 V4 H9 V0.5 H12 V4 H14 V8 Q14 12 9.5 13 V16 H5.5 V13 Q1 12 1 8 V4 H3 Z" fill="#1a8ad0"/><path d="M9 11 A4 4 0 0 1 16 9.5 M18 13 A4 4 0 0 1 11 14.5" stroke="#2ea043" stroke-width="1.7" fill="none"/></svg>
<svg style="left:129px;top:72px;" width="16" height="17" viewBox="0 0 16 17"><path d="M3 0.5 H6 V4 H9 V0.5 H12 V4 H14 V8 Q14 12 9.5 13 V16 H5.5 V13 Q1 12 1 8 V4 H3 Z" fill="#e8412c"/><path d="M1 1 L15 16" stroke="#f0f0f0" stroke-width="1.2"/></svg>
<div style="left:152.5px;top:64px;width:2px;height:32px;background:#8a8a8a;"></div>
<svg style="left:168px;top:72px;" width="16" height="17" viewBox="0 0 16 17"><path d="M4.5 11 V3 Q4.5 1.2 6.5 1.2 H15.5 L14 3" fill="none" stroke="#1a8ad0" stroke-width="1.9" stroke-linejoin="round"/><path d="M13.3 2 V14.3 Q13.3 16 11.6 16 H1 L2.5 14.8" fill="none" stroke="#1a8ad0" stroke-width="1.9" stroke-linejoin="round"/></svg>
<svg style="left:235px;top:78px;" width="12" height="7" viewBox="0 0 12 7"><path d="M0.5 0.5 H11.5 L6 6.5 Z" fill="#000"/></svg>
<svg style="left:252.5px;top:67px;" width="2" height="26" viewBox="0 0 2 26"><rect x="0" y="0.0" width="2" height="2" fill="#c2c2c2"/><rect x="0" y="8.0" width="2" height="2" fill="#c2c2c2"/><rect x="0" y="16.0" width="2" height="2" fill="#c2c2c2"/><rect x="0" y="24.0" width="2" height="2" fill="#c2c2c2"/></svg>
<svg style="left:261px;top:72px;" width="17" height="17" viewBox="0 0 17 17"><path d="M1.5 1 H9 L12.5 4.5 V9 M1.5 1 V16 H8" fill="none" stroke="#a6a6a6" stroke-width="1.3"/><path d="M9 1 V4.5 H12.5" fill="none" stroke="#a6a6a6" stroke-width="1.2"/><rect x="10" y="11" width="6" height="5" fill="none" stroke="#a6a6a6" stroke-width="1.2"/></svg>
<svg style="left:357px;top:72px;" width="17" height="17" viewBox="0 0 17 17"><path d="M1.5 1 H9 L12.5 4.5 V9 M1.5 1 V16 H8" fill="none" stroke="#a6a6a6" stroke-width="1.3"/><path d="M9 1 V4.5 H12.5" fill="none" stroke="#a6a6a6" stroke-width="1.2"/><path d="M10 12 H16 M14 10 L16 12 L14 14 M16 15.5 H10 M12 13.5 L10 15.5 L12 17" fill="none" stroke="#a6a6a6" stroke-width="1"/></svg>
<svg style="left:458px;top:72px;" width="18" height="17" viewBox="0 0 18 17"><path d="M1 2 H12 M6.5 2 V16" stroke="#1a8ad0" stroke-width="2.2"/><path d="M3 5 V8 M10 5 V8 M6.5 9 V16" stroke="#1a8ad0" stroke-width="1.2"/><path d="M14 5 H15.5 M14 9 H15.5 M14 13 H15.5" stroke="#1a8ad0" stroke-width="1.5"/></svg>
<svg style="left:487px;top:78px;" width="12" height="7" viewBox="0 0 12 7"><path d="M0.5 0.5 H11.5 L6 6.5 Z" fill="#000"/></svg>
<svg style="left:504.5px;top:71px;" width="2" height="19" viewBox="0 0 2 19"><rect x="0" y="0.0" width="2" height="2" fill="#c2c2c2"/><rect x="0" y="5.0" width="2" height="2" fill="#c2c2c2"/><rect x="0" y="10.0" width="2" height="2" fill="#c2c2c2"/><rect x="0" y="15.0" width="2" height="2" fill="#c2c2c2"/></svg>
<svg style="left:593px;top:71px;" width="19" height="18" viewBox="0 0 19 18"><path d="M4 9 A6.5 6.5 0 1 0 6 4" fill="none" stroke="#1a8ad0" stroke-width="1.9"/><path d="M1 6 L4.5 10.5 L8 6.5 Z" fill="#1a8ad0"/><path d="M10.5 5 V9.5 L13.5 11.5" stroke="#1a8ad0" stroke-width="1.7" fill="none"/></svg>
<svg style="left:621px;top:78px;" width="12" height="7" viewBox="0 0 12 7"><path d="M0.5 0.5 H11.5 L6 6.5 Z" fill="#000"/></svg>
<svg style="left:637.5px;top:71px;" width="2" height="19" viewBox="0 0 2 19"><rect x="0" y="0.0" width="2" height="2" fill="#c2c2c2"/><rect x="0" y="5.0" width="2" height="2" fill="#c2c2c2"/><rect x="0" y="10.0" width="2" height="2" fill="#c2c2c2"/><rect x="0" y="15.0" width="2" height="2" fill="#c2c2c2"/></svg>
<svg style="left:649px;top:73px;" width="19" height="16" viewBox="0 0 19 16"><path d="M1 15 Q6 12 10 9 Q14 5 17 2 L18 6 Q13 11 8 13 Z" fill="none" stroke="#9ab" stroke-width="1"/><path d="M3 14 L6 11" stroke="#9ab" stroke-width="1"/></svg>
<svg style="left:913px;top:78px;" width="12" height="7" viewBox="0 0 12 7"><path d="M0.5 0.5 H11.5 L6 6.5 Z" fill="#000"/></svg>
<svg style="left:937px;top:71px;" width="16" height="18" viewBox="0 0 16 18"><ellipse cx="8" cy="3.5" rx="7.2" ry="2.8" fill="#1a8ad0"/><path d="M0.8 6 Q8 10 15.2 6 V9 Q8 13 0.8 9 Z M0.8 11.5 Q8 15.5 15.2 11.5 V14.5 Q8 18.5 0.8 14.5 Z" fill="#1a8ad0"/></svg>
<svg style="left:1116px;top:78px;" width="12" height="7" viewBox="0 0 12 7"><path d="M0.5 0.5 H11.5 L6 6.5 Z" fill="#000"/></svg>
<svg style="left:1133px;top:71px;" width="2" height="19" viewBox="0 0 2 19"><rect x="0" y="0.0" width="2" height="2" fill="#c2c2c2"/><rect x="0" y="5.0" width="2" height="2" fill="#c2c2c2"/><rect x="0" y="10.0" width="2" height="2" fill="#c2c2c2"/><rect x="0" y="15.0" width="2" height="2" fill="#c2c2c2"/></svg>
<svg style="left:1140px;top:72px;" width="20" height="17" viewBox="0 0 20 17"><path d="M2 15 A8.2 8.2 0 1 1 18 15 Z" fill="none" stroke="#1a8ad0" stroke-width="1.9"/><path d="M10 12.5 L14 6.5" stroke="#1a8ad0" stroke-width="2"/><path d="M5 9 H6.5 M10 5 V6.5 M14.5 9.5 H15.5" stroke="#1a8ad0" stroke-width="1.4"/></svg>
<svg style="left:1168px;top:72px;" width="16" height="17" viewBox="0 0 16 17"><rect x="4.5" y="1" width="7" height="6" fill="none" stroke="#1a8ad0" stroke-width="1.6"/><path d="M8 7 V10 M2 10 H14 M2 10 V12 M14 10 V12" stroke="#1a8ad0" stroke-width="1.4" fill="none"/><rect x="0.8" y="12" width="5" height="4.2" fill="none" stroke="#1a8ad0" stroke-width="1.5"/><rect x="10.2" y="12" width="5" height="4.2" fill="none" stroke="#1a8ad0" stroke-width="1.5"/></svg>
<svg style="left:1194px;top:78px;" width="12" height="7" viewBox="0 0 12 7"><path d="M0.5 0.5 H11.5 L6 6.5 Z" fill="#000"/></svg>
<svg style="left:1211px;top:71px;" width="2" height="19" viewBox="0 0 2 19"><rect x="0" y="0.0" width="2" height="2" fill="#c2c2c2"/><rect x="0" y="5.0" width="2" height="2" fill="#c2c2c2"/><rect x="0" y="10.0" width="2" height="2" fill="#c2c2c2"/><rect x="0" y="15.0" width="2" height="2" fill="#c2c2c2"/></svg>
<svg style="left:1219px;top:71px;" width="21" height="20" viewBox="0 0 21 20"><g transform="rotate(-45 10.5 10)"><rect x="0" y="6.5" width="6" height="7" rx="3" fill="#fff3a8" stroke="#e8c860" stroke-width="0.8"/><rect x="5.5" y="6" width="5" height="8" fill="#b0aaa0" stroke="#8a8270" stroke-width="0.8"/><path d="M10.5 6 H16 L20 10 L16 14 H10.5 Z" fill="#f7c86a" stroke="#c99433" stroke-width="0.9"/><circle cx="16" cy="10" r="1" fill="#446"/></g></svg>
<svg style="left:1246px;top:78px;" width="12" height="7" viewBox="0 0 12 7"><path d="M0.5 0.5 H11.5 L6 6.5 Z" fill="#000"/></svg>
<svg style="left:1264px;top:71px;" width="2" height="19" viewBox="0 0 2 19"><rect x="0" y="0.0" width="2" height="2" fill="#c2c2c2"/><rect x="0" y="5.0" width="2" height="2" fill="#c2c2c2"/><rect x="0" y="10.0" width="2" height="2" fill="#c2c2c2"/><rect x="0" y="15.0" width="2" height="2" fill="#c2c2c2"/></svg>
<svg style="left:1270px;top:71px;" width="21" height="19" viewBox="0 0 21 19"><path d="M9 3 L2.5 9.5 L9 16 V12.5 H18.5 V6.5 H9 Z" fill="#fff2a0" stroke="#c99a2a" stroke-width="1.3" stroke-linejoin="round"/><path d="M4 1 L4 7 M1 4 H7 M1.8 1.8 L6.2 6.2 M6.2 1.8 L1.8 6.2" stroke="#2d4f7a" stroke-width="0.9"/></svg>
<svg style="left:1295px;top:71px;" width="21" height="19" viewBox="0 0 21 19"><path d="M12 3 L18.5 9.5 L12 16 V12.5 H2.5 V6.5 H12 Z" fill="#fff2a0" stroke="#c99a2a" stroke-width="1.3" stroke-linejoin="round"/><path d="M17 1 L17 7 M14 4 H20 M14.8 1.8 L19.2 6.2 M19.2 1.8 L14.8 6.2" stroke="#2d4f7a" stroke-width="0.9"/></svg>
<svg style="left:2774px;top:71px;" width="19" height="19" viewBox="0 0 19 19"><circle cx="7" cy="7" r="5.3" fill="none" stroke="#6b6b6b" stroke-width="2.2"/><path d="M11 11 L17.5 17.5" stroke="#6b6b6b" stroke-width="2.6"/></svg>
<svg style="left:2810px;top:70px;" width="2" height="21" viewBox="0 0 2 21"><rect x="0" y="0.0" width="2" height="2" fill="#c2c2c2"/><rect x="0" y="8.0" width="2" height="2" fill="#c2c2c2"/><rect x="0" y="16.0" width="2" height="2" fill="#c2c2c2"/></svg>
<svg style="left:2816px;top:71px;" width="18" height="18" viewBox="0 0 18 18"><rect x="1" y="4" width="13" height="13" fill="#fff" stroke="#7d8fa0" stroke-width="1.2"/><path d="M1 8 H14 M1 12.5 H14 M6 4 V17" stroke="#7d8fa0" stroke-width="1"/><rect x="1.5" y="4.5" width="12" height="3" fill="#9cc9ee"/><path d="M14 0.5 L15 3 L17.5 4 L15 5 L14 7.5 L13 5 L10.5 4 L13 3 Z" fill="#f2c230" stroke="#c99a12" stroke-width="0.6"/></svg>
<div style="left:2842px;top:70px;width:1px;height:21px;background:#888;"></div>
<div style="left:2849px;top:68px;width:8px;height:23px;background:#cfe3f5;box-sizing:border-box;border:1px solid #8db9e0;border-right:none;"></div>
<svg style="left:7px;top:108px;" width="17" height="17" viewBox="0 0 17 17"><g fill="#1a8ad0"><ellipse cx="6.5" cy="3" rx="5.8" ry="2.3"/><path d="M0.7 5 Q6.5 8 12 5 V7 Q6.5 10 0.7 7 Z M0.7 9 Q6.5 12 10 9.5 V11.5 Q6.5 14 0.7 11 Z M0.7 13 Q5 15.5 9 13.5 V15.5 Q5 17.5 0.7 15 Z"/></g><g fill="#1a8ad0" stroke="#e6e6e6" stroke-width="0.8"><ellipse cx="11" cy="6.5" rx="5.5" ry="2.3"/><path d="M5.5 8.5 Q11 11.5 16.5 8.5 V10.5 Q11 13.5 5.5 10.5 Z M5.5 12 Q11 15 16.5 12 V14 Q11 17 5.5 14 Z"/></g></svg>
<svg style="left:188px;top:108px;" width="18" height="17" viewBox="0 0 18 17"><path d="M1 11 V1 H11" fill="none" stroke="#1a8ad0" stroke-width="1.6"/><rect x="1" y="0.5" width="10" height="2" fill="#1a8ad0"/><rect x="4.6" y="4.6" width="12.5" height="11.5" fill="#5ac8f0" stroke="#1a8ad0" stroke-width="1.5"/><rect x="4.6" y="4.6" width="12.5" height="2.6" fill="#1a8ad0"/></svg>
<svg style="left:277px;top:110px;" width="13" height="13" viewBox="0 0 13 13"><path d="M1.5 3.5 L3.5 1.5 L6.5 4.5 L9.5 1.5 L11.5 3.5 L8.5 6.5 L11.5 9.5 L9.5 11.5 L6.5 8.5 L3.5 11.5 L1.5 9.5 L4.5 6.5 Z" fill="#fff" stroke="#7a7a7a" stroke-width="1"/></svg>
<svg style="left:392px;top:107px;" width="40" height="14" viewBox="0 0 40 14"><rect x="0.8" y="1.8" width="11" height="3.6" fill="#fff" stroke="#555" stroke-width="1.3"/><rect x="26.6" y="0.7" width="12" height="12.4" fill="#fff" stroke="#555" stroke-width="1.3"/><path d="M26.6 3 H38.6" stroke="#555" stroke-width="2"/></svg>
<svg style="left:271px;top:137px;" width="19" height="17" viewBox="0 0 19 17"><rect x="0.8" y="0.8" width="16" height="13" rx="2" fill="#86c6ee" stroke="#3a8fd0" stroke-width="1.4"/><rect x="0.8" y="0.8" width="16" height="2.6" rx="1" fill="#3a8fd0"/><circle cx="14.5" cy="13.5" r="4.2" fill="#f0f0f0"/><path d="M14.5 10.5 V16.5 M11.5 13.5 H17.5" stroke="#4caf50" stroke-width="1.7"/></svg>
<div style="left:296px;top:135px;width:1.5px;height:20px;background:#8a8a8a;"></div>
<svg style="left:307px;top:140px;" width="17" height="9" viewBox="0 0 17 9"><path d="M3 2 H15.5 M1 6.5 H13" stroke="#3a7fb8" stroke-width="2"/></svg>
<svg style="left:331px;top:138px;" width="18" height="14" viewBox="0 0 18 14"><path d="M5 4 H15 M12 1 L16 4 L12 7" stroke="#1a8ad0" stroke-width="2.2" fill="none"/><path d="M13 9.5 H3 M6 6.5 L2 9.5 L6 12.5" stroke="#1ea03a" stroke-width="2.2" fill="none"/></svg>
<svg style="left:358px;top:137px;" width="16" height="16" viewBox="0 0 16 16"><polygon points="16.00,8.00 15.85,9.56 13.32,10.20 12.79,11.20 13.66,13.66 12.44,14.65 10.20,13.32 9.12,13.65 8.00,16.00 6.44,15.85 5.80,13.32 4.80,12.79 2.34,13.66 1.35,12.44 2.68,10.20 2.35,9.12 0.00,8.00 0.15,6.44 2.68,5.80 3.21,4.80 2.34,2.34 3.56,1.35 5.80,2.68 6.88,2.35 8.00,0.00 9.56,0.15 10.20,2.68 11.20,3.21 13.66,2.34 14.65,3.56 13.32,5.80 13.65,6.88" fill="#1a8ad0"/><circle cx="8.0" cy="8.0" r="2.56" fill="#cfe8f8"/></svg>
<div style="left:382px;top:135px;width:1.5px;height:20px;background:#8a8a8a;"></div>
<svg style="left:392px;top:135.5px;" width="19" height="19" viewBox="0 0 19 19"><g transform="rotate(40 9.5 9.5)"><path d="M2.5 11 V8 Q2.5 4.5 6 4.5 H14" stroke="#1a8ad0" stroke-width="2.1" fill="none"/><path d="M12.5 1.5 L16.5 4.5 L12.5 7.5 Z" fill="#1a8ad0"/><path d="M16.5 8 V11 Q16.5 14.5 13 14.5 H5" stroke="#1a8ad0" stroke-width="2.1" fill="none"/><path d="M6.5 11.5 L2.5 14.5 L6.5 17.5 Z" fill="#1a8ad0"/><path d="M7 8 L9.5 10.5 L12 8" stroke="#1a8ad0" stroke-width="1.2" fill="none"/></g></svg>
<svg style="left:423px;top:137px;" width="8" height="17" viewBox="0 0 8 17"><circle cx="4" cy="3" r="2.2" fill="none" stroke="#777" stroke-width="1.2"/><circle cx="4" cy="8.5" r="2.2" fill="none" stroke="#777" stroke-width="1.2"/><circle cx="4" cy="14" r="2.2" fill="none" stroke="#777" stroke-width="1.2"/></svg>
<svg style="left:11px;top:165px;" width="8" height="12" viewBox="0 0 8 12"><path d="M1.5 1.5 L6 6 L1.5 10.5" stroke="#9a9a9a" stroke-width="1.6" fill="none"/></svg>
<svg style="left:29px;top:162px;" width="16" height="14" viewBox="0 0 16 14"><rect x="0.9" y="0.9" width="14.2" height="12.2" rx="1" fill="#5ac8f0" stroke="#1a8ad0" stroke-width="1.6"/><rect x="0.9" y="0.9" width="14.2" height="2.6" fill="#1a8ad0"/></svg>
<svg style="left:7px;top:1241px;" width="17" height="15" viewBox="0 0 17 15"><rect x="0.9" y="0.9" width="15.2" height="13.2" rx="1" fill="#5ac8f0" stroke="#1a8ad0" stroke-width="1.6"/><rect x="0.9" y="0.9" width="15.2" height="2.6" fill="#1a8ad0"/></svg>
<svg style="left:160px;top:1241px;" width="13" height="13" viewBox="0 0 13 13"><path d="M1.5 3.5 L3.5 1.5 L6.5 4.5 L9.5 1.5 L11.5 3.5 L8.5 6.5 L11.5 9.5 L9.5 11.5 L6.5 8.5 L3.5 11.5 L1.5 9.5 L4.5 6.5 Z" fill="#fff" stroke="#7a7a7a" stroke-width="1"/></svg>
<svg style="left:287px;top:1237px;" width="16" height="16" viewBox="0 0 16 16"><polygon points="16.00,8.00 15.85,9.56 13.32,10.20 12.79,11.20 13.66,13.66 12.44,14.65 10.20,13.32 9.12,13.65 8.00,16.00 6.44,15.85 5.80,13.32 4.80,12.79 2.34,13.66 1.35,12.44 2.68,10.20 2.35,9.12 0.00,8.00 0.15,6.44 2.68,5.80 3.21,4.80 2.34,2.34 3.56,1.35 5.80,2.68 6.88,2.35 8.00,0.00 9.56,0.15 10.20,2.68 11.20,3.21 13.66,2.34 14.65,3.56 13.32,5.80 13.65,6.88" fill="#1a8ad0"/><circle cx="8.0" cy="8.0" r="2.56" fill="#cfe8f8"/></svg>
<svg style="left:312px;top:1240px;" width="17" height="9" viewBox="0 0 17 9"><path d="M3 2 H15.5 M1 6.5 H13" stroke="#3a7fb8" stroke-width="2"/></svg>
<svg style="left:339px;top:1237px;" width="17" height="16" viewBox="0 0 17 16"><path d="M8 2 V15 M1.5 8.5 H15" stroke="#1a8ad0" stroke-width="2.2"/><path d="M11 1 H16 M13.5 -1.5 V3.5" stroke="#1a8ad0" stroke-width="1" /></svg>
<svg style="left:362px;top:1238px;" width="18" height="14" viewBox="0 0 18 14"><path d="M5 4 H15 M12 1 L16 4 L12 7" stroke="#1a8ad0" stroke-width="2.2" fill="none"/><path d="M13 9.5 H3 M6 6.5 L2 9.5 L6 12.5" stroke="#1ea03a" stroke-width="2.2" fill="none"/></svg>
<svg style="left:391px;top:1238px;" width="40" height="14" viewBox="0 0 40 14"><rect x="0.8" y="1.8" width="11" height="3.6" fill="#fff" stroke="#555" stroke-width="1.3"/><rect x="26.6" y="0.7" width="12" height="12.4" fill="#fff" stroke="#555" stroke-width="1.3"/><path d="M26.6 3 H38.6" stroke="#555" stroke-width="2"/></svg>
<svg style="left:12px;top:1302px;" width="8" height="12" viewBox="0 0 8 12"><path d="M1.5 1.5 L6 6 L1.5 10.5" stroke="#9a9a9a" stroke-width="1.6" fill="none"/></svg>
<svg style="left:12px;top:1328px;" width="8" height="12" viewBox="0 0 8 12"><path d="M1.5 1.5 L6 6 L1.5 10.5" stroke="#9a9a9a" stroke-width="1.6" fill="none"/></svg>
<svg style="left:12px;top:1353px;" width="8" height="12" viewBox="0 0 8 12"><path d="M1.5 1.5 L6 6 L1.5 10.5" stroke="#9a9a9a" stroke-width="1.6" fill="none"/></svg>
<svg style="left:27px;top:1297px;" width="19" height="18" viewBox="0 0 19 18"><path d="M1 3 Q1 1.5 2.5 1.5 H7 L9 3.5 H15.5 Q17 3.5 17 5 V13.5 H1 Z" fill="#f6b26b" stroke="#f29111" stroke-width="1.2"/><path d="M14 10 L15.2 12.6 L18 12.8 L15.9 14.6 L16.6 17.4 L14 15.9 L11.4 17.4 L12.1 14.6 L10 12.8 L12.8 12.6 Z" fill="#f29111"/></svg>
<svg style="left:28px;top:1323px;" width="17" height="15" viewBox="0 0 17 15"><path d="M1 2.5 Q1 1 2.5 1 H6 L8 3 H15 Q16 3 16 4 V14 H1 Z" fill="#fff" stroke="#f29111" stroke-width="1.6"/><rect x="3" y="6" width="4" height="5" fill="none" stroke="#f29111" stroke-width="1.3"/><rect x="9.5" y="6" width="4" height="5" fill="none" stroke="#f29111" stroke-width="1.3"/></svg>
<svg style="left:28px;top:1348px;" width="17" height="15" viewBox="0 0 17 15"><path d="M1 2.5 Q1 1 2.5 1 H6 L8 3 H15 Q16 3 16 4 V14 H1 Z" fill="#f29111"/><path d="M6 5.5 V11 Q6 12 4.5 12 H4 M6 5.5 H11 V11 Q11 12 10 12 H4.5" fill="none" stroke="#fff" stroke-width="1.2"/></svg>
<svg style="left:2632px;top:1130px;" width="17" height="17" viewBox="0 0 17 17"><path d="M9.5 1.5 L15.5 7.5 L8 15 H5 L1.5 11.5 Z" fill="none" stroke="#a0a0a0" stroke-width="1.7"/><path d="M6 5 L12 11" stroke="#a0a0a0" stroke-width="1.3"/><path d="M11 15.5 H16" stroke="#a0a0a0" stroke-width="1"/></svg>
<svg style="left:2656px;top:1130px;" width="19" height="17" viewBox="0 0 19 17"><path d="M1 1.5 H13 L8.5 7 V15 L5.5 12.5 V7 Z" fill="none" stroke="#a6a6a6" stroke-width="1.4"/><rect x="11.5" y="10" width="5" height="5" fill="none" stroke="#a6a6a6" stroke-width="1.2"/></svg>
<svg style="left:2683px;top:1130px;" width="19" height="18" viewBox="0 0 19 18"><rect x="1" y="1" width="14" height="14" fill="#e8f5fd" stroke="#1a8ad0" stroke-width="1.6"/><rect x="1" y="1" width="14" height="3" fill="#1a8ad0"/><rect x="2" y="4" width="4" height="10" fill="#7cc8f0"/><path d="M6 4 V15 M1 8 H15 M1 11.5 H9" stroke="#1a8ad0" stroke-width="1.1"/><circle cx="14" cy="13.5" r="3.2" fill="#1a8ad0"/><circle cx="14" cy="13.5" r="1.2" fill="#e8f5fd"/></svg>
<svg style="left:2706.5px;top:1131px;" width="2" height="18" viewBox="0 0 2 18"><rect x="0" y="0.0" width="2" height="2" fill="#c2c2c2"/><rect x="0" y="4.6" width="2" height="2" fill="#c2c2c2"/><rect x="0" y="9.2" width="2" height="2" fill="#c2c2c2"/><rect x="0" y="13.8" width="2" height="2" fill="#c2c2c2"/></svg>
<svg style="left:2717px;top:1128.5px;" width="19" height="19" viewBox="0 0 19 19"><g transform="rotate(40 9.5 9.5)"><path d="M2.5 11 V8 Q2.5 4.5 6 4.5 H14" stroke="#1a8ad0" stroke-width="2.1" fill="none"/><path d="M12.5 1.5 L16.5 4.5 L12.5 7.5 Z" fill="#1a8ad0"/><path d="M16.5 8 V11 Q16.5 14.5 13 14.5 H5" stroke="#1a8ad0" stroke-width="2.1" fill="none"/><path d="M6.5 11.5 L2.5 14.5 L6.5 17.5 Z" fill="#1a8ad0"/><path d="M7 8 L9.5 10.5 L12 8" stroke="#1a8ad0" stroke-width="1.2" fill="none"/></g></svg>
<svg style="left:2745px;top:1135px;" width="12" height="7" viewBox="0 0 12 7"><path d="M0.5 0.5 H11.5 L6 6.5 Z" fill="#000"/></svg>
<svg style="left:2762px;top:1131px;" width="2" height="18" viewBox="0 0 2 18"><rect x="0" y="0.0" width="2" height="2" fill="#c2c2c2"/><rect x="0" y="4.6" width="2" height="2" fill="#c2c2c2"/><rect x="0" y="9.2" width="2" height="2" fill="#c2c2c2"/><rect x="0" y="13.8" width="2" height="2" fill="#c2c2c2"/></svg>
<svg style="left:2775px;top:1131px;" width="17" height="13" viewBox="0 0 17 13"><path d="M7 1 L1 6.5 L7 12 V8.5 H16 V4.5 H7 Z" fill="#a2a2a2"/></svg>
<svg style="left:2801px;top:1135px;" width="12" height="7" viewBox="0 0 12 7"><path d="M0.5 0.5 H11.5 L6 6.5 Z" fill="#777"/></svg>
<svg style="left:2822px;top:1131px;" width="17" height="13" viewBox="0 0 17 13"><path d="M10 1 L16 6.5 L10 12 V8.5 H1 V4.5 H10 Z" fill="#a2a2a2"/></svg>
<svg style="left:2847px;top:1135px;" width="12" height="7" viewBox="0 0 12 7"><path d="M0.5 0.5 H11.5 L6 6.5 Z" fill="#777"/></svg>
<div class="t" style="left:2825px;top:1188px;width:64px;height:19px;transform:rotate(90deg);font-family:'Liberation Sans';font-size:17px;line-height:19px;color:#333;text-align:center;">Panels</div>
<div style="left:2846px;top:1157px;width:11px;height:10px;background:#f0f0f0;"></div>
<svg style="left:2849px;top:1252px;" width="8" height="17" viewBox="0 0 8 17"><rect x="1" y="1" width="14" height="15" fill="none" stroke="#1a8ad0" stroke-width="1.8"/><path d="M1 6 H15" stroke="#1a8ad0" stroke-width="1.5"/></svg>
<svg style="left:2849px;top:1277px;" width="8" height="17" viewBox="0 0 8 17"><rect x="1" y="1" width="14" height="15" fill="none" stroke="#1a8ad0" stroke-width="1.8"/><path d="M1 6 H15" stroke="#1a8ad0" stroke-width="1.5"/></svg>
<svg style="left:2849px;top:1302px;" width="8" height="17" viewBox="0 0 8 17"><rect x="1" y="1" width="14" height="15" fill="none" stroke="#1a8ad0" stroke-width="1.8"/><path d="M1 6 H15" stroke="#1a8ad0" stroke-width="1.5"/></svg>
<svg style="left:2849px;top:1326px;" width="8" height="17" viewBox="0 0 8 17"><rect x="1" y="1" width="14" height="15" fill="none" stroke="#f29111" stroke-width="1.8"/><path d="M1 6 H15" stroke="#f29111" stroke-width="1.5"/></svg>
<svg style="left:2849px;top:1350px;" width="8" height="17" viewBox="0 0 8 17"><rect x="1" y="1" width="14" height="15" fill="none" stroke="#1a8ad0" stroke-width="1.8"/><path d="M1 6 H15" stroke="#1a8ad0" stroke-width="1.5"/></svg>
<svg style="left:451px;top:108px;" width="16" height="17" viewBox="0 0 16 17"><path d="M4.5 11 V3 Q4.5 1.2 6.5 1.2 H15.5 L14 3" fill="none" stroke="#1a8ad0" stroke-width="1.9" stroke-linejoin="round"/><path d="M13.3 2 V14.3 Q13.3 16 11.6 16 H1 L2.5 14.8" fill="none" stroke="#1a8ad0" stroke-width="1.9" stroke-linejoin="round"/></svg>
<svg style="left:742px;top:108px;" width="16" height="17" viewBox="0 0 16 17"><path d="M4.5 11 V3 Q4.5 1.2 6.5 1.2 H15.5 L14 3" fill="none" stroke="#1a8ad0" stroke-width="1.9" stroke-linejoin="round"/><path d="M13.3 2 V14.3 Q13.3 16 11.6 16 H1 L2.5 14.8" fill="none" stroke="#1a8ad0" stroke-width="1.9" stroke-linejoin="round"/></svg>
<svg style="left:1043px;top:110px;" width="13" height="13" viewBox="0 0 13 13"><path d="M1.5 3.5 L3.5 1.5 L6.5 4.5 L9.5 1.5 L11.5 3.5 L8.5 6.5 L11.5 9.5 L9.5 11.5 L6.5 8.5 L3.5 11.5 L1.5 9.5 L4.5 6.5 Z" fill="#fff" stroke="#7a7a7a" stroke-width="1"/></svg>
<svg style="left:1069px;top:108px;" width="16" height="17" viewBox="0 0 16 17"><path d="M4.5 11 V3 Q4.5 1.2 6.5 1.2 H15.5 L14 3" fill="none" stroke="#1a8ad0" stroke-width="1.9" stroke-linejoin="round"/><path d="M13.3 2 V14.3 Q13.3 16 11.6 16 H1 L2.5 14.8" fill="none" stroke="#1a8ad0" stroke-width="1.9" stroke-linejoin="round"/></svg>
<svg style="left:1374px;top:108px;" width="16" height="17" viewBox="0 0 16 17"><path d="M4.5 11 V3 Q4.5 1.2 6.5 1.2 H15.5 L14 3" fill="none" stroke="#1a8ad0" stroke-width="1.9" stroke-linejoin="round"/><path d="M13.3 2 V14.3 Q13.3 16 11.6 16 H1 L2.5 14.8" fill="none" stroke="#1a8ad0" stroke-width="1.9" stroke-linejoin="round"/></svg>
<div style="left:2831px;top:108px;width:13px;height:5px;background:#fff;box-sizing:border-box;border:1.3px solid #555;"></div>
<div style="left:2855px;top:106px;width:2px;height:13px;background:#555;"></div>
<svg style="left:453px;top:1101px;" width="14" height="16" viewBox="0 0 14 16"><path d="M0.8 0.8 H9 L12.5 4.3 V14.5 H0.8 Z" fill="#9fdcf8" stroke="#1a8ad0" stroke-width="1.5"/><path d="M4.7 1 V14.5 M8.6 4 V14.5 M1 4.5 H12.5 M1 8 H12.5 M1 11.3 H12.5" stroke="#1a8ad0" stroke-width="1.3"/></svg>
<svg style="left:624px;top:1101px;" width="14" height="16" viewBox="0 0 14 16"><path d="M0.8 0.8 H9 L12.5 4.3 V14.5 H0.8 Z" fill="#9fdcf8" stroke="#1a8ad0" stroke-width="1.5"/><path d="M4.7 1 V14.5 M8.6 4 V14.5 M1 4.5 H12.5 M1 8 H12.5 M1 11.3 H12.5" stroke="#1a8ad0" stroke-width="1.3"/></svg>
<svg style="left:804px;top:1101px;" width="13" height="13" viewBox="0 0 13 13"><path d="M1.5 3.5 L3.5 1.5 L6.5 4.5 L9.5 1.5 L11.5 3.5 L8.5 6.5 L11.5 9.5 L9.5 11.5 L6.5 8.5 L3.5 11.5 L1.5 9.5 L4.5 6.5 Z" fill="#fff" stroke="#7a7a7a" stroke-width="1"/></svg>
<div style="left:9px;top:55px;width:8px;height:1px;background:#000;"></div>
<div style="left:50px;top:55px;width:9px;height:1px;background:#000;"></div>
<div style="left:95px;top:55px;width:12px;height:1px;background:#000;"></div>
<div style="left:200px;top:55px;width:9px;height:1px;background:#000;"></div>
<div style="left:242px;top:55px;width:10px;height:1px;background:#000;"></div>
<div style="left:336px;top:55px;width:11px;height:1px;background:#000;"></div>
<div style="left:421px;top:55px;width:15px;height:1px;background:#000;"></div>
<div style="left:499px;top:55px;width:11px;height:1px;background:#000;"></div>
</body></html>
